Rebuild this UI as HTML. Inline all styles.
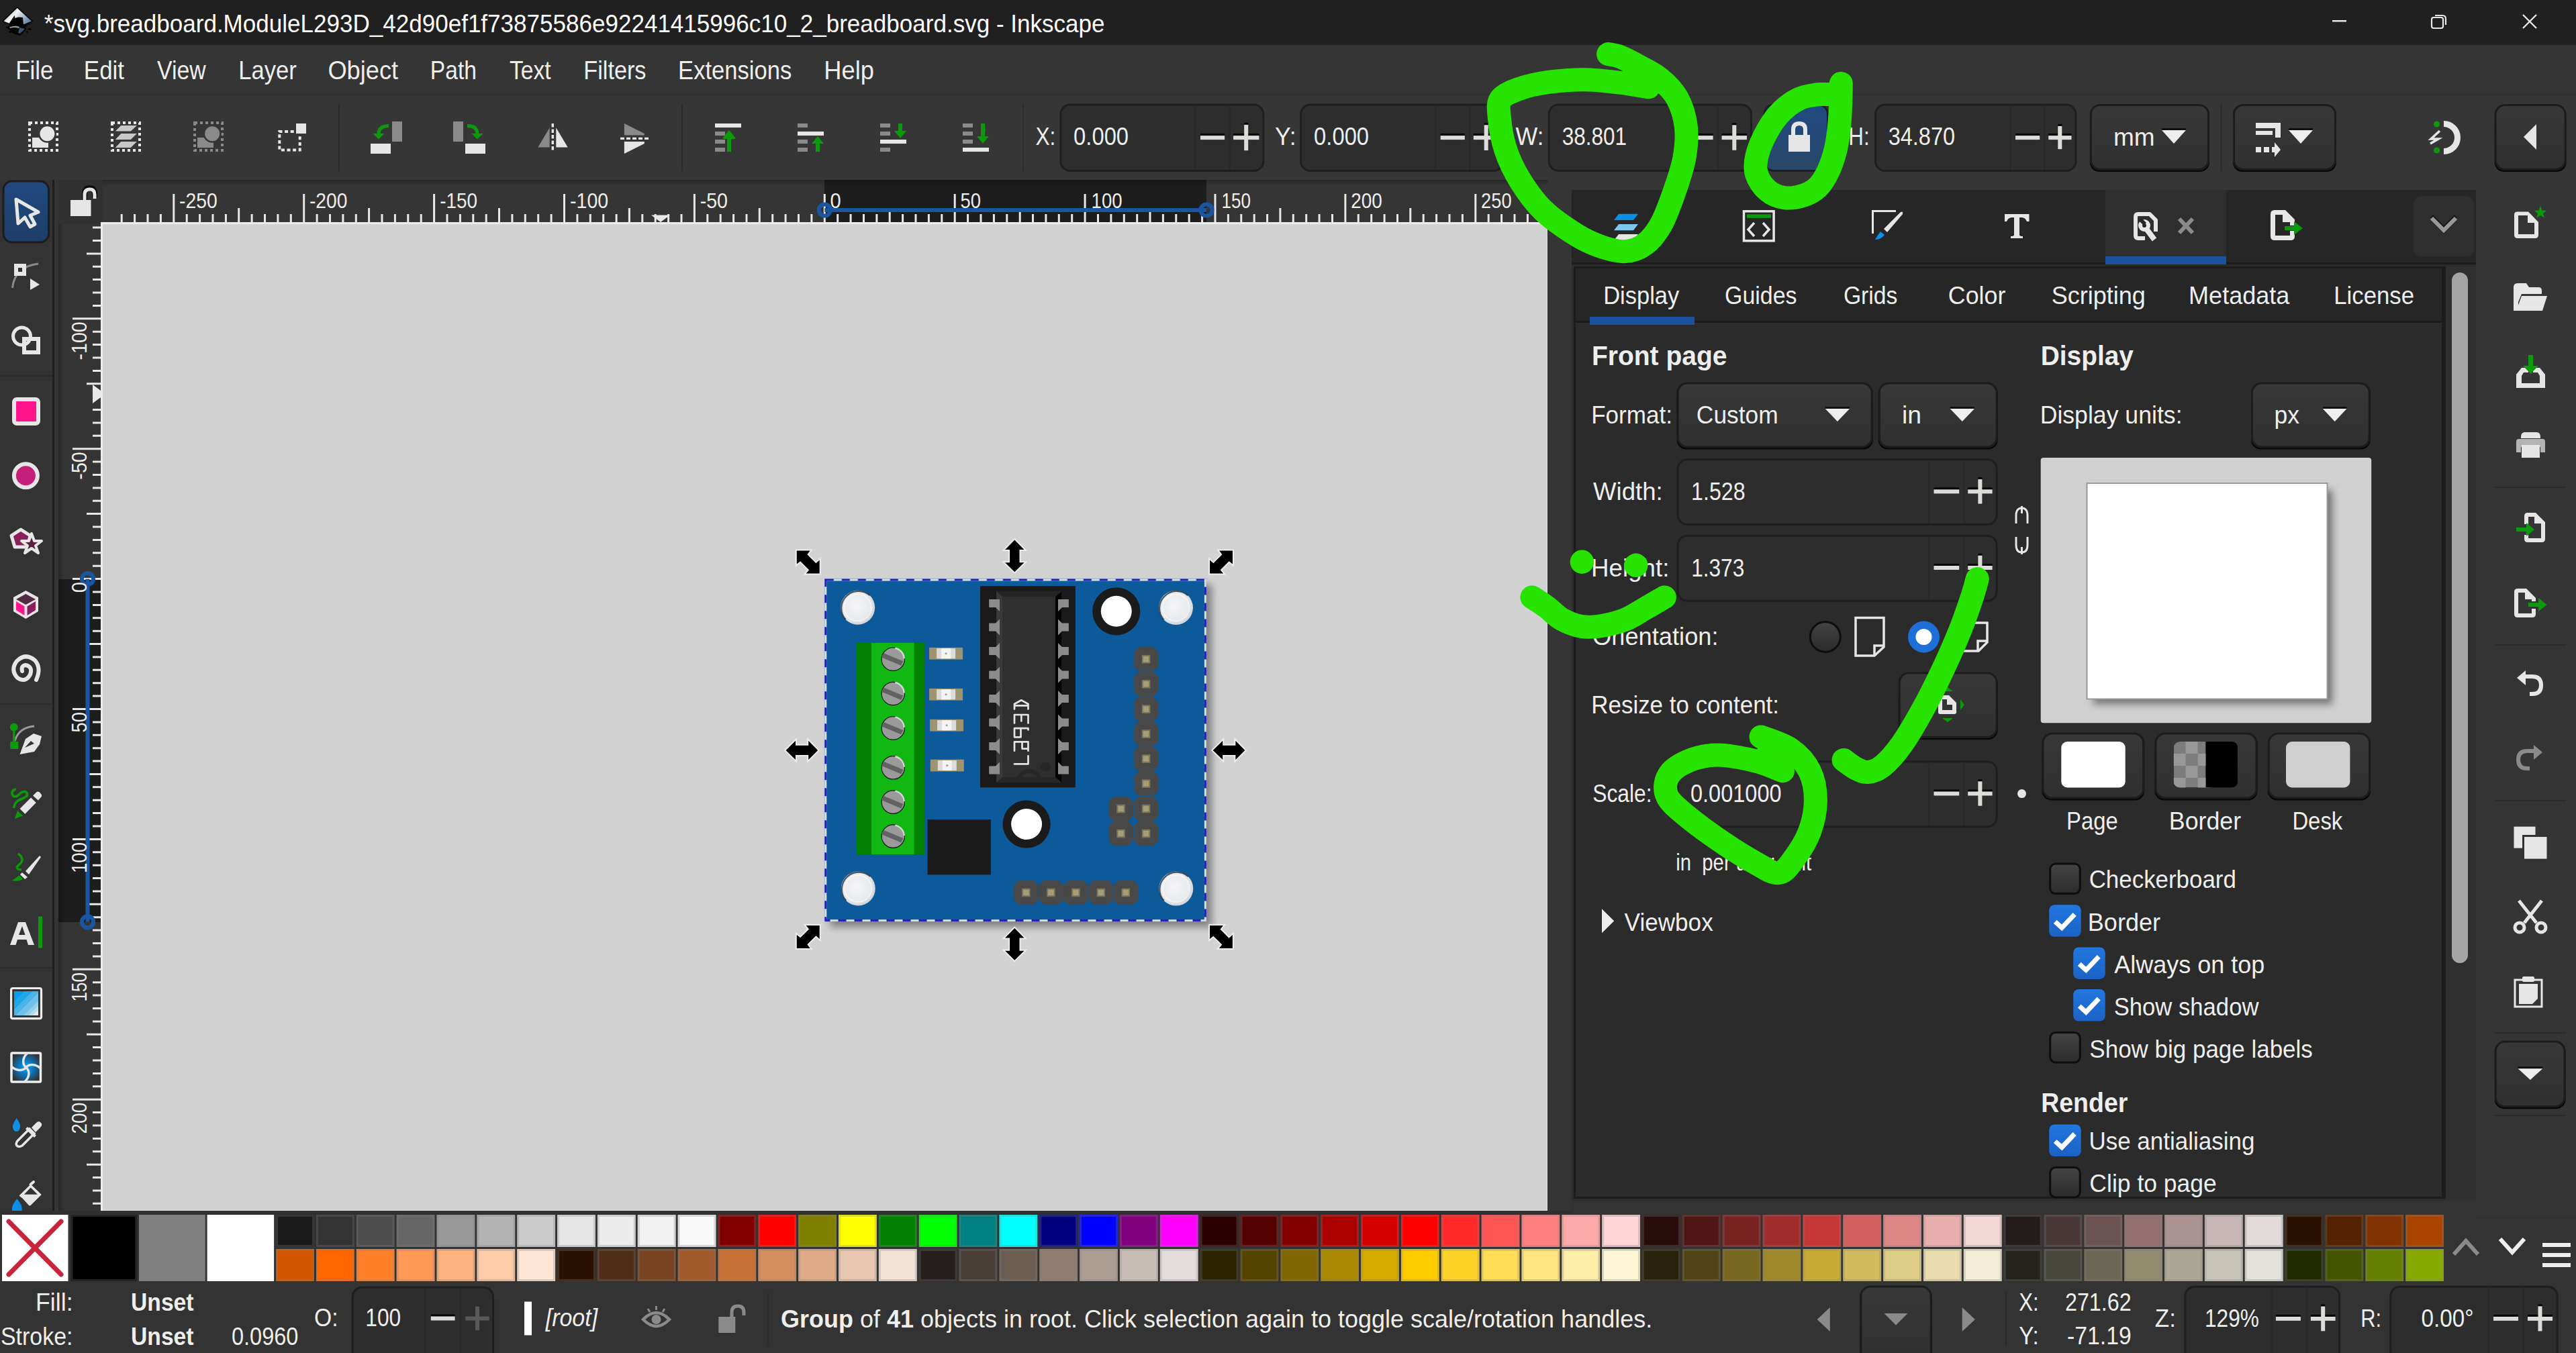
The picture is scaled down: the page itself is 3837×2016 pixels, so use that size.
<!DOCTYPE html><html><head><meta charset="utf-8"><style>html,body{margin:0;padding:0;background:#333;overflow:hidden;width:3837px;height:2016px}svg{position:absolute;left:0;top:0;display:block}text{font-family:"Liberation Sans",sans-serif;white-space:pre}</style></head><body><svg width="3837" height="2016" viewBox="0 0 3837 2016"><rect x="0" y="0" width="3837" height="2016" fill="#333333" />
<rect x="0" y="0" width="3837" height="67" fill="#202020" />
<rect x="0" y="67" width="3837" height="73" fill="#353535" />
<rect x="0" y="140" width="3837" height="2" fill="#303030" />
<rect x="0" y="142" width="3837" height="126" fill="#363636" />
<rect x="0" y="268" width="78" height="1542" fill="#333333" />
<rect x="78" y="268" width="3" height="1542" fill="#1f1f1f" />
<rect x="81" y="268" width="6" height="1542" fill="#353535" />
<rect x="87" y="268" width="66" height="66" fill="#313131" />
<rect x="153" y="268" width="2152" height="63" fill="#353535" />
<rect x="87" y="334" width="63" height="1470" fill="#353535" />
<rect x="153" y="334" width="2152" height="1470" fill="#d2d2d2" />
<rect x="150" y="331" width="2155" height="3" fill="#ececec" />
<rect x="150" y="331" width="3" height="1473" fill="#ececec" />
<rect x="2304" y="334" width="1" height="1470" fill="#e2e2e2" />
<rect x="153" y="1803" width="2152" height="1" fill="#e2e2e2" />
<rect x="2305" y="268" width="36" height="1542" fill="#353535" />
<rect x="2305" y="331" width="1" height="1473" fill="#2c2c2c" />
<rect x="2341" y="268" width="1347" height="15" fill="#353535" />
<rect x="0" y="1804" width="2341" height="6" fill="#303030" />
<rect x="2341" y="283" width="1347" height="1506" fill="#2c2c2c" />
<rect x="2341" y="283" width="1347" height="108" fill="#262626" />
<rect x="3136" y="283" width="180" height="108" fill="#2e2e2e" />
<rect x="3136" y="382" width="180" height="12" fill="#1a52a0" />
<rect x="2341" y="391" width="795" height="3" fill="#1c1c1c" />
<rect x="3316" y="391" width="372" height="3" fill="#1c1c1c" />
<rect x="2341" y="394" width="1347" height="3" fill="#2a2a2a" />
<rect x="2344" y="397" width="1299" height="1389" fill="#1c1c1c" />
<rect x="2347" y="400" width="1290" height="1383" fill="#2b2b2b" />
<rect x="2347" y="400" width="1290" height="78" fill="#262626" />
<rect x="2347" y="478" width="1290" height="3" fill="#1c1c1c" />
<rect x="2368" y="472" width="156" height="12" fill="#1a52a0" />
<rect x="3643" y="397" width="45" height="1392" fill="#2f2f2f" />
<rect x="3652" y="406" width="24" height="1029" rx="12" fill="#a5a5a5"/>
<rect x="3688" y="268" width="149" height="1542" fill="#353535" />
<rect x="0" y="1810" width="3837" height="206" fill="#333333" />
<rect x="411.10" y="1810" width="56.85" height="48" fill="#1a1a1a"/>
<rect x="412.60" y="1811.5" width="53.85" height="45" fill="none" stroke="rgba(128,128,128,0.28)" stroke-width="3"/>
<rect x="470.95" y="1810" width="56.85" height="48" fill="#333333"/>
<rect x="472.45" y="1811.5" width="53.85" height="45" fill="none" stroke="rgba(128,128,128,0.28)" stroke-width="3"/>
<rect x="530.80" y="1810" width="56.85" height="48" fill="#4d4d4d"/>
<rect x="532.30" y="1811.5" width="53.85" height="45" fill="none" stroke="rgba(128,128,128,0.28)" stroke-width="3"/>
<rect x="590.65" y="1810" width="56.85" height="48" fill="#666666"/>
<rect x="592.15" y="1811.5" width="53.85" height="45" fill="none" stroke="rgba(128,128,128,0.28)" stroke-width="3"/>
<rect x="650.50" y="1810" width="56.85" height="48" fill="#999999"/>
<rect x="652.00" y="1811.5" width="53.85" height="45" fill="none" stroke="rgba(128,128,128,0.28)" stroke-width="3"/>
<rect x="710.35" y="1810" width="56.85" height="48" fill="#b3b3b3"/>
<rect x="711.85" y="1811.5" width="53.85" height="45" fill="none" stroke="rgba(128,128,128,0.28)" stroke-width="3"/>
<rect x="770.20" y="1810" width="56.85" height="48" fill="#cccccc"/>
<rect x="771.70" y="1811.5" width="53.85" height="45" fill="none" stroke="rgba(128,128,128,0.28)" stroke-width="3"/>
<rect x="830.05" y="1810" width="56.85" height="48" fill="#e6e6e6"/>
<rect x="831.55" y="1811.5" width="53.85" height="45" fill="none" stroke="rgba(128,128,128,0.28)" stroke-width="3"/>
<rect x="889.90" y="1810" width="56.85" height="48" fill="#ececec"/>
<rect x="891.40" y="1811.5" width="53.85" height="45" fill="none" stroke="rgba(128,128,128,0.28)" stroke-width="3"/>
<rect x="949.75" y="1810" width="56.85" height="48" fill="#f2f2f2"/>
<rect x="951.25" y="1811.5" width="53.85" height="45" fill="none" stroke="rgba(128,128,128,0.28)" stroke-width="3"/>
<rect x="1009.60" y="1810" width="56.85" height="48" fill="#f9f9f9"/>
<rect x="1011.10" y="1811.5" width="53.85" height="45" fill="none" stroke="rgba(128,128,128,0.28)" stroke-width="3"/>
<rect x="1069.45" y="1810" width="56.85" height="48" fill="#800000"/>
<rect x="1070.95" y="1811.5" width="53.85" height="45" fill="none" stroke="rgba(128,128,128,0.28)" stroke-width="3"/>
<rect x="1129.30" y="1810" width="56.85" height="48" fill="#ff0000"/>
<rect x="1130.80" y="1811.5" width="53.85" height="45" fill="none" stroke="rgba(128,128,128,0.28)" stroke-width="3"/>
<rect x="1189.15" y="1810" width="56.85" height="48" fill="#808000"/>
<rect x="1190.65" y="1811.5" width="53.85" height="45" fill="none" stroke="rgba(128,128,128,0.28)" stroke-width="3"/>
<rect x="1249.00" y="1810" width="56.85" height="48" fill="#ffff00"/>
<rect x="1250.50" y="1811.5" width="53.85" height="45" fill="none" stroke="rgba(128,128,128,0.28)" stroke-width="3"/>
<rect x="1308.85" y="1810" width="56.85" height="48" fill="#008000"/>
<rect x="1310.35" y="1811.5" width="53.85" height="45" fill="none" stroke="rgba(128,128,128,0.28)" stroke-width="3"/>
<rect x="1368.70" y="1810" width="56.85" height="48" fill="#00ff00"/>
<rect x="1370.20" y="1811.5" width="53.85" height="45" fill="none" stroke="rgba(128,128,128,0.28)" stroke-width="3"/>
<rect x="1428.55" y="1810" width="56.85" height="48" fill="#008080"/>
<rect x="1430.05" y="1811.5" width="53.85" height="45" fill="none" stroke="rgba(128,128,128,0.28)" stroke-width="3"/>
<rect x="1488.40" y="1810" width="56.85" height="48" fill="#00ffff"/>
<rect x="1489.90" y="1811.5" width="53.85" height="45" fill="none" stroke="rgba(128,128,128,0.28)" stroke-width="3"/>
<rect x="1548.25" y="1810" width="56.85" height="48" fill="#000080"/>
<rect x="1549.75" y="1811.5" width="53.85" height="45" fill="none" stroke="rgba(128,128,128,0.28)" stroke-width="3"/>
<rect x="1608.10" y="1810" width="56.85" height="48" fill="#0000ff"/>
<rect x="1609.60" y="1811.5" width="53.85" height="45" fill="none" stroke="rgba(128,128,128,0.28)" stroke-width="3"/>
<rect x="1667.95" y="1810" width="56.85" height="48" fill="#800080"/>
<rect x="1669.45" y="1811.5" width="53.85" height="45" fill="none" stroke="rgba(128,128,128,0.28)" stroke-width="3"/>
<rect x="1727.80" y="1810" width="56.85" height="48" fill="#ff00ff"/>
<rect x="1729.30" y="1811.5" width="53.85" height="45" fill="none" stroke="rgba(128,128,128,0.28)" stroke-width="3"/>
<rect x="1787.65" y="1810" width="56.85" height="48" fill="#2b0000"/>
<rect x="1789.15" y="1811.5" width="53.85" height="45" fill="none" stroke="rgba(128,128,128,0.28)" stroke-width="3"/>
<rect x="1847.50" y="1810" width="56.85" height="48" fill="#550000"/>
<rect x="1849.00" y="1811.5" width="53.85" height="45" fill="none" stroke="rgba(128,128,128,0.28)" stroke-width="3"/>
<rect x="1907.35" y="1810" width="56.85" height="48" fill="#800000"/>
<rect x="1908.85" y="1811.5" width="53.85" height="45" fill="none" stroke="rgba(128,128,128,0.28)" stroke-width="3"/>
<rect x="1967.20" y="1810" width="56.85" height="48" fill="#aa0000"/>
<rect x="1968.70" y="1811.5" width="53.85" height="45" fill="none" stroke="rgba(128,128,128,0.28)" stroke-width="3"/>
<rect x="2027.05" y="1810" width="56.85" height="48" fill="#d40000"/>
<rect x="2028.55" y="1811.5" width="53.85" height="45" fill="none" stroke="rgba(128,128,128,0.28)" stroke-width="3"/>
<rect x="2086.90" y="1810" width="56.85" height="48" fill="#ff0000"/>
<rect x="2088.40" y="1811.5" width="53.85" height="45" fill="none" stroke="rgba(128,128,128,0.28)" stroke-width="3"/>
<rect x="2146.75" y="1810" width="56.85" height="48" fill="#ff2a2a"/>
<rect x="2148.25" y="1811.5" width="53.85" height="45" fill="none" stroke="rgba(128,128,128,0.28)" stroke-width="3"/>
<rect x="2206.60" y="1810" width="56.85" height="48" fill="#ff5555"/>
<rect x="2208.10" y="1811.5" width="53.85" height="45" fill="none" stroke="rgba(128,128,128,0.28)" stroke-width="3"/>
<rect x="2266.45" y="1810" width="56.85" height="48" fill="#ff8080"/>
<rect x="2267.95" y="1811.5" width="53.85" height="45" fill="none" stroke="rgba(128,128,128,0.28)" stroke-width="3"/>
<rect x="2326.30" y="1810" width="56.85" height="48" fill="#ffaaaa"/>
<rect x="2327.80" y="1811.5" width="53.85" height="45" fill="none" stroke="rgba(128,128,128,0.28)" stroke-width="3"/>
<rect x="2386.15" y="1810" width="56.85" height="48" fill="#ffd5d5"/>
<rect x="2387.65" y="1811.5" width="53.85" height="45" fill="none" stroke="rgba(128,128,128,0.28)" stroke-width="3"/>
<rect x="2446.00" y="1810" width="56.85" height="48" fill="#280b0b"/>
<rect x="2447.50" y="1811.5" width="53.85" height="45" fill="none" stroke="rgba(128,128,128,0.28)" stroke-width="3"/>
<rect x="2505.85" y="1810" width="56.85" height="48" fill="#501616"/>
<rect x="2507.35" y="1811.5" width="53.85" height="45" fill="none" stroke="rgba(128,128,128,0.28)" stroke-width="3"/>
<rect x="2565.70" y="1810" width="56.85" height="48" fill="#782121"/>
<rect x="2567.20" y="1811.5" width="53.85" height="45" fill="none" stroke="rgba(128,128,128,0.28)" stroke-width="3"/>
<rect x="2625.55" y="1810" width="56.85" height="48" fill="#a02c2c"/>
<rect x="2627.05" y="1811.5" width="53.85" height="45" fill="none" stroke="rgba(128,128,128,0.28)" stroke-width="3"/>
<rect x="2685.40" y="1810" width="56.85" height="48" fill="#c83737"/>
<rect x="2686.90" y="1811.5" width="53.85" height="45" fill="none" stroke="rgba(128,128,128,0.28)" stroke-width="3"/>
<rect x="2745.25" y="1810" width="56.85" height="48" fill="#d35f5f"/>
<rect x="2746.75" y="1811.5" width="53.85" height="45" fill="none" stroke="rgba(128,128,128,0.28)" stroke-width="3"/>
<rect x="2805.10" y="1810" width="56.85" height="48" fill="#de8787"/>
<rect x="2806.60" y="1811.5" width="53.85" height="45" fill="none" stroke="rgba(128,128,128,0.28)" stroke-width="3"/>
<rect x="2864.95" y="1810" width="56.85" height="48" fill="#e9afaf"/>
<rect x="2866.45" y="1811.5" width="53.85" height="45" fill="none" stroke="rgba(128,128,128,0.28)" stroke-width="3"/>
<rect x="2924.80" y="1810" width="56.85" height="48" fill="#f4d7d7"/>
<rect x="2926.30" y="1811.5" width="53.85" height="45" fill="none" stroke="rgba(128,128,128,0.28)" stroke-width="3"/>
<rect x="2984.65" y="1810" width="56.85" height="48" fill="#241c1c"/>
<rect x="2986.15" y="1811.5" width="53.85" height="45" fill="none" stroke="rgba(128,128,128,0.28)" stroke-width="3"/>
<rect x="3044.50" y="1810" width="56.85" height="48" fill="#483737"/>
<rect x="3046.00" y="1811.5" width="53.85" height="45" fill="none" stroke="rgba(128,128,128,0.28)" stroke-width="3"/>
<rect x="3104.35" y="1810" width="56.85" height="48" fill="#6c5353"/>
<rect x="3105.85" y="1811.5" width="53.85" height="45" fill="none" stroke="rgba(128,128,128,0.28)" stroke-width="3"/>
<rect x="3164.20" y="1810" width="56.85" height="48" fill="#916f6f"/>
<rect x="3165.70" y="1811.5" width="53.85" height="45" fill="none" stroke="rgba(128,128,128,0.28)" stroke-width="3"/>
<rect x="3224.05" y="1810" width="56.85" height="48" fill="#ac9393"/>
<rect x="3225.55" y="1811.5" width="53.85" height="45" fill="none" stroke="rgba(128,128,128,0.28)" stroke-width="3"/>
<rect x="3283.90" y="1810" width="56.85" height="48" fill="#c8b7b7"/>
<rect x="3285.40" y="1811.5" width="53.85" height="45" fill="none" stroke="rgba(128,128,128,0.28)" stroke-width="3"/>
<rect x="3343.75" y="1810" width="56.85" height="48" fill="#e3dbdb"/>
<rect x="3345.25" y="1811.5" width="53.85" height="45" fill="none" stroke="rgba(128,128,128,0.28)" stroke-width="3"/>
<rect x="3403.60" y="1810" width="56.85" height="48" fill="#2b1100"/>
<rect x="3405.10" y="1811.5" width="53.85" height="45" fill="none" stroke="rgba(128,128,128,0.28)" stroke-width="3"/>
<rect x="3463.45" y="1810" width="56.85" height="48" fill="#552200"/>
<rect x="3464.95" y="1811.5" width="53.85" height="45" fill="none" stroke="rgba(128,128,128,0.28)" stroke-width="3"/>
<rect x="3523.30" y="1810" width="56.85" height="48" fill="#803300"/>
<rect x="3524.80" y="1811.5" width="53.85" height="45" fill="none" stroke="rgba(128,128,128,0.28)" stroke-width="3"/>
<rect x="3583.15" y="1810" width="56.85" height="48" fill="#aa4400"/>
<rect x="3584.65" y="1811.5" width="53.85" height="45" fill="none" stroke="rgba(128,128,128,0.28)" stroke-width="3"/>
<rect x="411.10" y="1861" width="56.85" height="48" fill="#d45500"/>
<rect x="412.60" y="1862.5" width="53.85" height="45" fill="none" stroke="rgba(128,128,128,0.28)" stroke-width="3"/>
<rect x="470.95" y="1861" width="56.85" height="48" fill="#ff6600"/>
<rect x="472.45" y="1862.5" width="53.85" height="45" fill="none" stroke="rgba(128,128,128,0.28)" stroke-width="3"/>
<rect x="530.80" y="1861" width="56.85" height="48" fill="#ff7f2a"/>
<rect x="532.30" y="1862.5" width="53.85" height="45" fill="none" stroke="rgba(128,128,128,0.28)" stroke-width="3"/>
<rect x="590.65" y="1861" width="56.85" height="48" fill="#ff9955"/>
<rect x="592.15" y="1862.5" width="53.85" height="45" fill="none" stroke="rgba(128,128,128,0.28)" stroke-width="3"/>
<rect x="650.50" y="1861" width="56.85" height="48" fill="#ffb380"/>
<rect x="652.00" y="1862.5" width="53.85" height="45" fill="none" stroke="rgba(128,128,128,0.28)" stroke-width="3"/>
<rect x="710.35" y="1861" width="56.85" height="48" fill="#ffccaa"/>
<rect x="711.85" y="1862.5" width="53.85" height="45" fill="none" stroke="rgba(128,128,128,0.28)" stroke-width="3"/>
<rect x="770.20" y="1861" width="56.85" height="48" fill="#ffe6d5"/>
<rect x="771.70" y="1862.5" width="53.85" height="45" fill="none" stroke="rgba(128,128,128,0.28)" stroke-width="3"/>
<rect x="830.05" y="1861" width="56.85" height="48" fill="#2b1100"/>
<rect x="831.55" y="1862.5" width="53.85" height="45" fill="none" stroke="rgba(128,128,128,0.28)" stroke-width="3"/>
<rect x="889.90" y="1861" width="56.85" height="48" fill="#502d16"/>
<rect x="891.40" y="1862.5" width="53.85" height="45" fill="none" stroke="rgba(128,128,128,0.28)" stroke-width="3"/>
<rect x="949.75" y="1861" width="56.85" height="48" fill="#784421"/>
<rect x="951.25" y="1862.5" width="53.85" height="45" fill="none" stroke="rgba(128,128,128,0.28)" stroke-width="3"/>
<rect x="1009.60" y="1861" width="56.85" height="48" fill="#a05a2c"/>
<rect x="1011.10" y="1862.5" width="53.85" height="45" fill="none" stroke="rgba(128,128,128,0.28)" stroke-width="3"/>
<rect x="1069.45" y="1861" width="56.85" height="48" fill="#c87137"/>
<rect x="1070.95" y="1862.5" width="53.85" height="45" fill="none" stroke="rgba(128,128,128,0.28)" stroke-width="3"/>
<rect x="1129.30" y="1861" width="56.85" height="48" fill="#d38d5f"/>
<rect x="1130.80" y="1862.5" width="53.85" height="45" fill="none" stroke="rgba(128,128,128,0.28)" stroke-width="3"/>
<rect x="1189.15" y="1861" width="56.85" height="48" fill="#deaa87"/>
<rect x="1190.65" y="1862.5" width="53.85" height="45" fill="none" stroke="rgba(128,128,128,0.28)" stroke-width="3"/>
<rect x="1249.00" y="1861" width="56.85" height="48" fill="#e9c6af"/>
<rect x="1250.50" y="1862.5" width="53.85" height="45" fill="none" stroke="rgba(128,128,128,0.28)" stroke-width="3"/>
<rect x="1308.85" y="1861" width="56.85" height="48" fill="#f4e3d7"/>
<rect x="1310.35" y="1862.5" width="53.85" height="45" fill="none" stroke="rgba(128,128,128,0.28)" stroke-width="3"/>
<rect x="1368.70" y="1861" width="56.85" height="48" fill="#241f1c"/>
<rect x="1370.20" y="1862.5" width="53.85" height="45" fill="none" stroke="rgba(128,128,128,0.28)" stroke-width="3"/>
<rect x="1428.55" y="1861" width="56.85" height="48" fill="#483e37"/>
<rect x="1430.05" y="1862.5" width="53.85" height="45" fill="none" stroke="rgba(128,128,128,0.28)" stroke-width="3"/>
<rect x="1488.40" y="1861" width="56.85" height="48" fill="#6c5d53"/>
<rect x="1489.90" y="1862.5" width="53.85" height="45" fill="none" stroke="rgba(128,128,128,0.28)" stroke-width="3"/>
<rect x="1548.25" y="1861" width="56.85" height="48" fill="#917c6f"/>
<rect x="1549.75" y="1862.5" width="53.85" height="45" fill="none" stroke="rgba(128,128,128,0.28)" stroke-width="3"/>
<rect x="1608.10" y="1861" width="56.85" height="48" fill="#ac9d93"/>
<rect x="1609.60" y="1862.5" width="53.85" height="45" fill="none" stroke="rgba(128,128,128,0.28)" stroke-width="3"/>
<rect x="1667.95" y="1861" width="56.85" height="48" fill="#c8beb7"/>
<rect x="1669.45" y="1862.5" width="53.85" height="45" fill="none" stroke="rgba(128,128,128,0.28)" stroke-width="3"/>
<rect x="1727.80" y="1861" width="56.85" height="48" fill="#e3dedb"/>
<rect x="1729.30" y="1862.5" width="53.85" height="45" fill="none" stroke="rgba(128,128,128,0.28)" stroke-width="3"/>
<rect x="1787.65" y="1861" width="56.85" height="48" fill="#2b2200"/>
<rect x="1789.15" y="1862.5" width="53.85" height="45" fill="none" stroke="rgba(128,128,128,0.28)" stroke-width="3"/>
<rect x="1847.50" y="1861" width="56.85" height="48" fill="#554400"/>
<rect x="1849.00" y="1862.5" width="53.85" height="45" fill="none" stroke="rgba(128,128,128,0.28)" stroke-width="3"/>
<rect x="1907.35" y="1861" width="56.85" height="48" fill="#806600"/>
<rect x="1908.85" y="1862.5" width="53.85" height="45" fill="none" stroke="rgba(128,128,128,0.28)" stroke-width="3"/>
<rect x="1967.20" y="1861" width="56.85" height="48" fill="#aa8800"/>
<rect x="1968.70" y="1862.5" width="53.85" height="45" fill="none" stroke="rgba(128,128,128,0.28)" stroke-width="3"/>
<rect x="2027.05" y="1861" width="56.85" height="48" fill="#d4aa00"/>
<rect x="2028.55" y="1862.5" width="53.85" height="45" fill="none" stroke="rgba(128,128,128,0.28)" stroke-width="3"/>
<rect x="2086.90" y="1861" width="56.85" height="48" fill="#ffcc00"/>
<rect x="2088.40" y="1862.5" width="53.85" height="45" fill="none" stroke="rgba(128,128,128,0.28)" stroke-width="3"/>
<rect x="2146.75" y="1861" width="56.85" height="48" fill="#ffd42a"/>
<rect x="2148.25" y="1862.5" width="53.85" height="45" fill="none" stroke="rgba(128,128,128,0.28)" stroke-width="3"/>
<rect x="2206.60" y="1861" width="56.85" height="48" fill="#ffdd55"/>
<rect x="2208.10" y="1862.5" width="53.85" height="45" fill="none" stroke="rgba(128,128,128,0.28)" stroke-width="3"/>
<rect x="2266.45" y="1861" width="56.85" height="48" fill="#ffe680"/>
<rect x="2267.95" y="1862.5" width="53.85" height="45" fill="none" stroke="rgba(128,128,128,0.28)" stroke-width="3"/>
<rect x="2326.30" y="1861" width="56.85" height="48" fill="#ffeeaa"/>
<rect x="2327.80" y="1862.5" width="53.85" height="45" fill="none" stroke="rgba(128,128,128,0.28)" stroke-width="3"/>
<rect x="2386.15" y="1861" width="56.85" height="48" fill="#fff6d5"/>
<rect x="2387.65" y="1862.5" width="53.85" height="45" fill="none" stroke="rgba(128,128,128,0.28)" stroke-width="3"/>
<rect x="2446.00" y="1861" width="56.85" height="48" fill="#28220b"/>
<rect x="2447.50" y="1862.5" width="53.85" height="45" fill="none" stroke="rgba(128,128,128,0.28)" stroke-width="3"/>
<rect x="2505.85" y="1861" width="56.85" height="48" fill="#504416"/>
<rect x="2507.35" y="1862.5" width="53.85" height="45" fill="none" stroke="rgba(128,128,128,0.28)" stroke-width="3"/>
<rect x="2565.70" y="1861" width="56.85" height="48" fill="#786721"/>
<rect x="2567.20" y="1862.5" width="53.85" height="45" fill="none" stroke="rgba(128,128,128,0.28)" stroke-width="3"/>
<rect x="2625.55" y="1861" width="56.85" height="48" fill="#a0892c"/>
<rect x="2627.05" y="1862.5" width="53.85" height="45" fill="none" stroke="rgba(128,128,128,0.28)" stroke-width="3"/>
<rect x="2685.40" y="1861" width="56.85" height="48" fill="#c8ab37"/>
<rect x="2686.90" y="1862.5" width="53.85" height="45" fill="none" stroke="rgba(128,128,128,0.28)" stroke-width="3"/>
<rect x="2745.25" y="1861" width="56.85" height="48" fill="#d3bc5f"/>
<rect x="2746.75" y="1862.5" width="53.85" height="45" fill="none" stroke="rgba(128,128,128,0.28)" stroke-width="3"/>
<rect x="2805.10" y="1861" width="56.85" height="48" fill="#decd87"/>
<rect x="2806.60" y="1862.5" width="53.85" height="45" fill="none" stroke="rgba(128,128,128,0.28)" stroke-width="3"/>
<rect x="2864.95" y="1861" width="56.85" height="48" fill="#e9ddaf"/>
<rect x="2866.45" y="1862.5" width="53.85" height="45" fill="none" stroke="rgba(128,128,128,0.28)" stroke-width="3"/>
<rect x="2924.80" y="1861" width="56.85" height="48" fill="#f4eed7"/>
<rect x="2926.30" y="1862.5" width="53.85" height="45" fill="none" stroke="rgba(128,128,128,0.28)" stroke-width="3"/>
<rect x="2984.65" y="1861" width="56.85" height="48" fill="#24241c"/>
<rect x="2986.15" y="1862.5" width="53.85" height="45" fill="none" stroke="rgba(128,128,128,0.28)" stroke-width="3"/>
<rect x="3044.50" y="1861" width="56.85" height="48" fill="#48473e"/>
<rect x="3046.00" y="1862.5" width="53.85" height="45" fill="none" stroke="rgba(128,128,128,0.28)" stroke-width="3"/>
<rect x="3104.35" y="1861" width="56.85" height="48" fill="#6c6753"/>
<rect x="3105.85" y="1862.5" width="53.85" height="45" fill="none" stroke="rgba(128,128,128,0.28)" stroke-width="3"/>
<rect x="3164.20" y="1861" width="56.85" height="48" fill="#918a6f"/>
<rect x="3165.70" y="1862.5" width="53.85" height="45" fill="none" stroke="rgba(128,128,128,0.28)" stroke-width="3"/>
<rect x="3224.05" y="1861" width="56.85" height="48" fill="#aca793"/>
<rect x="3225.55" y="1862.5" width="53.85" height="45" fill="none" stroke="rgba(128,128,128,0.28)" stroke-width="3"/>
<rect x="3283.90" y="1861" width="56.85" height="48" fill="#c8c4b7"/>
<rect x="3285.40" y="1862.5" width="53.85" height="45" fill="none" stroke="rgba(128,128,128,0.28)" stroke-width="3"/>
<rect x="3343.75" y="1861" width="56.85" height="48" fill="#e3e2db"/>
<rect x="3345.25" y="1862.5" width="53.85" height="45" fill="none" stroke="rgba(128,128,128,0.28)" stroke-width="3"/>
<rect x="3403.60" y="1861" width="56.85" height="48" fill="#222b00"/>
<rect x="3405.10" y="1862.5" width="53.85" height="45" fill="none" stroke="rgba(128,128,128,0.28)" stroke-width="3"/>
<rect x="3463.45" y="1861" width="56.85" height="48" fill="#445500"/>
<rect x="3464.95" y="1862.5" width="53.85" height="45" fill="none" stroke="rgba(128,128,128,0.28)" stroke-width="3"/>
<rect x="3523.30" y="1861" width="56.85" height="48" fill="#668000"/>
<rect x="3524.80" y="1862.5" width="53.85" height="45" fill="none" stroke="rgba(128,128,128,0.28)" stroke-width="3"/>
<rect x="3583.15" y="1861" width="56.85" height="48" fill="#88aa00"/>
<rect x="3584.65" y="1862.5" width="53.85" height="45" fill="none" stroke="rgba(128,128,128,0.28)" stroke-width="3"/>
<rect x="3" y="1810" width="98.5" height="99" fill="#ffffff"/>
<path d="M13 1820 L91 1899 M91 1820 L13 1899" stroke="#c8243c" stroke-width="7" stroke-linecap="round"/>
<rect x="105.50" y="1810" width="98.70" height="99" fill="#000000"/>
<rect x="107.00" y="1811.5" width="95.70" height="96" fill="none" stroke="rgba(128,128,128,0.28)" stroke-width="3"/>
<rect x="207.00" y="1810" width="98.60" height="99" fill="#808080"/>
<rect x="208.50" y="1811.5" width="95.60" height="96" fill="none" stroke="rgba(128,128,128,0.28)" stroke-width="3"/>
<rect x="308.6" y="1810" width="99.5" height="99" fill="#ffffff"/>
<path d="M3655 1869 L3673 1849 L3691 1869" fill="none" stroke="#8a8a8a" stroke-width="6"/>
<path d="M3724 1846 L3742 1866 L3760 1846" fill="none" stroke="#eeeeec" stroke-width="6"/>
<rect x="3787" y="1852" width="42" height="6" fill="#eeeeec" />
<rect x="3787" y="1867" width="42" height="6" fill="#eeeeec" />
<rect x="3787" y="1882" width="42" height="6" fill="#eeeeec" />
<rect x="1228" y="268" width="569" height="63" fill="#1d1d1d" />
<rect x="87" y="863" width="63" height="511" fill="#1d1d1d" />
<defs><linearGradient id="vrsh" x1="0" y1="0" x2="1" y2="0"><stop offset="0" stop-color="#000" stop-opacity="0.25"/><stop offset="1" stop-color="#000" stop-opacity="0"/></linearGradient><linearGradient id="hrsh" x1="0" y1="0" x2="0" y2="1"><stop offset="0" stop-color="#000" stop-opacity="0.25"/><stop offset="1" stop-color="#000" stop-opacity="0"/></linearGradient></defs>
<rect x="87" y="334" width="10" height="1470" fill="url(#vrsh)"/>
<rect x="153" y="268" width="2152" height="9" fill="url(#hrsh)"/>
<path d="M181.2 319V331 M200.6 319V331 M220.0 319V331 M239.4 319V331 M258.8 289V331 M278.2 319V331 M297.6 319V331 M317.0 319V331 M336.4 319V331 M355.7 310V331 M375.1 319V331 M394.5 319V331 M413.9 319V331 M433.3 319V331 M452.7 289V331 M472.1 319V331 M491.5 319V331 M510.9 319V331 M530.3 319V331 M549.6 310V331 M569.0 319V331 M588.4 319V331 M607.8 319V331 M627.2 319V331 M646.6 289V331 M666.0 319V331 M685.4 319V331 M704.8 319V331 M724.2 319V331 M743.5 310V331 M762.9 319V331 M782.3 319V331 M801.7 319V331 M821.1 319V331 M840.5 289V331 M859.9 319V331 M879.3 319V331 M898.7 319V331 M918.1 319V331 M937.4 310V331 M956.8 319V331 M976.2 319V331 M995.6 319V331 M1015.0 319V331 M1034.4 289V331 M1053.8 319V331 M1073.2 319V331 M1092.6 319V331 M1112.0 319V331 M1131.3 310V331 M1150.7 319V331 M1170.1 319V331 M1189.5 319V331 M1208.9 319V331 M1228.3 289V331 M1247.7 319V331 M1267.1 319V331 M1286.5 319V331 M1305.9 319V331 M1325.2 310V331 M1344.6 319V331 M1364.0 319V331 M1383.4 319V331 M1402.8 319V331 M1422.2 289V331 M1441.6 319V331 M1461.0 319V331 M1480.4 319V331 M1499.8 319V331 M1519.2 310V331 M1538.5 319V331 M1557.9 319V331 M1577.3 319V331 M1596.7 319V331 M1616.1 289V331 M1635.5 319V331 M1654.9 319V331 M1674.3 319V331 M1693.7 319V331 M1713.0 310V331 M1732.4 319V331 M1751.8 319V331 M1771.2 319V331 M1790.6 319V331 M1810.0 289V331 M1829.4 319V331 M1848.8 319V331 M1868.2 319V331 M1887.6 319V331 M1906.9 310V331 M1926.3 319V331 M1945.7 319V331 M1965.1 319V331 M1984.5 319V331 M2003.9 289V331 M2023.3 319V331 M2042.7 319V331 M2062.1 319V331 M2081.5 319V331 M2100.8 310V331 M2120.2 319V331 M2139.6 319V331 M2159.0 319V331 M2178.4 319V331 M2197.8 289V331 M2217.2 319V331 M2236.6 319V331 M2256.0 319V331 M2275.4 319V331 M2294.8 310V331" stroke="#e8e8e8" stroke-width="3"/>
<path d="M138 339.1H150 M138 358.5H150 M129 377.9H150 M138 397.2H150 M138 416.6H150 M138 436.0H150 M138 455.4H150 M108 474.8H150 M138 494.2H150 M138 513.6H150 M138 533.0H150 M138 552.4H150 M129 571.8H150 M138 591.1H150 M138 610.5H150 M138 629.9H150 M138 649.3H150 M108 668.7H150 M138 688.1H150 M138 707.5H150 M138 726.9H150 M138 746.3H150 M129 765.6H150 M138 785.0H150 M138 804.4H150 M138 823.8H150 M138 843.2H150 M108 862.6H150 M138 882.0H150 M138 901.4H150 M138 920.8H150 M138 940.2H150 M129 959.6H150 M138 978.9H150 M138 998.3H150 M138 1017.7H150 M138 1037.1H150 M108 1056.5H150 M138 1075.9H150 M138 1095.3H150 M138 1114.7H150 M138 1134.1H150 M129 1153.5H150 M138 1172.8H150 M138 1192.2H150 M138 1211.6H150 M138 1231.0H150 M108 1250.4H150 M138 1269.8H150 M138 1289.2H150 M138 1308.6H150 M138 1328.0H150 M129 1347.3H150 M138 1366.7H150 M138 1386.1H150 M138 1405.5H150 M138 1424.9H150 M108 1444.3H150 M138 1463.7H150 M138 1483.1H150 M138 1502.5H150 M138 1521.9H150 M129 1541.2H150 M138 1560.6H150 M138 1580.0H150 M138 1599.4H150 M138 1618.8H150 M108 1638.2H150 M138 1657.6H150 M138 1677.0H150 M138 1696.4H150 M138 1715.8H150 M129 1735.2H150 M138 1754.5H150 M138 1773.9H150 M138 1793.3H150" stroke="#e8e8e8" stroke-width="3"/>
<rect x="1228.3" y="310" width="568.7" height="6" fill="#1a56a0"/>
<rect x="127.5" y="862.6" width="6" height="511.1" fill="#1a56a0"/>
<circle cx="1228.3" cy="313.0" r="8.6" fill="none" stroke="#1a56a0" stroke-width="6"/>
<circle cx="1797.0" cy="313.0" r="8.6" fill="none" stroke="#1a56a0" stroke-width="6"/>
<circle cx="130.5" cy="862.6" r="8.6" fill="none" stroke="#1a56a0" stroke-width="6"/>
<circle cx="130.5" cy="1373.7" r="8.6" fill="none" stroke="#1a56a0" stroke-width="6"/>
<path d="M970 320.5 L998 320.5 L984 331 Z" fill="#e8e8e8"/>
<path d="M138 573 L150 582 L150 592 L138 601 Z" fill="#e8e8e8"/>
<defs><linearGradient id="btng" x1="0" y1="0" x2="0" y2="1"><stop offset="0" stop-color="#383838"/><stop offset="1" stop-color="#303030"/></linearGradient></defs>
<defs><linearGradient id="logog" x1="0" y1="0" x2="1" y2="0.6"><stop offset="0" stop-color="#8a8a8a"/><stop offset="0.45" stop-color="#f4f4f4"/><stop offset="1" stop-color="#6a84aa"/></linearGradient></defs>
<path d="M25.6 9.5 L49.5 31.8 L38 40 L39 44 L30 53.5 L22 51 L18 49 L14 44 L8.5 41 L15 38 L3 31.4 Z" fill="#050505"/>
<path d="M25.6 12 L47 31.6 L36 36 L30 37.5 L18 36.5 L5.5 31.4 Z" fill="url(#logog)"/>
<path d="M13 36 L21.5 23 L22.5 27 L27.5 25.5 L34 26 L35 37.5 L27 38 Z" fill="#000"/>
<path d="M14 40.5 Q22 37.5 29 40 L28 42 Q21 40 15 42 Z" fill="#9a9a9a"/>
<path d="M29 41 L37 43 L30 50 L27 49 Z" fill="#3a5070"/>
<circle cx="15.2" cy="47.4" r="1.5" fill="#000"/><circle cx="40.5" cy="47.5" r="1.3" fill="#000"/><ellipse cx="44" cy="43.5" rx="2.6" ry="1.6" fill="#000"/>
<rect x="3474" y="30" width="21" height="2.5" fill="#e8e8e8"/>
<rect x="3622" y="26" width="17" height="16" rx="3" fill="none" stroke="#e8e8e8" stroke-width="2.2"/>
<path d="M3627 23 H3638 Q3643 23 3643 28 V37" fill="none" stroke="#e8e8e8" stroke-width="2.2"/>
<path d="M3758 22 L3778 42 M3778 22 L3758 42" stroke="#e8e8e8" stroke-width="2.4"/>
<rect x="44.0" y="183.0" width="41.0" height="41.0" fill="none" stroke="#e6e6e6" stroke-width="4" stroke-dasharray="4 4"/>
<rect x="48" y="205" width="24" height="15" fill="#e6e6e6"/><circle cx="70.4" cy="199.2" r="12.3" fill="#e6e6e6" stroke="#363636" stroke-width="2.6"/>
<rect x="167.0" y="183.0" width="41.0" height="41.0" fill="none" stroke="#e6e6e6" stroke-width="4" stroke-dasharray="4 4"/>
<path d="M171.8 195.6 H194.8 L203.9 187.1 H180.3Z M171.8 207.9 H194.8 L203.9 199 H180.3Z M171.8 219.9 H194.8 L203.9 211 H180.3Z" fill="#c8c8c8"/>
<rect x="290.0" y="183.0" width="41.0" height="41.0" fill="none" stroke="#8a8a8a" stroke-width="4" stroke-dasharray="4 4"/>
<rect x="294" y="205" width="24" height="15" fill="#8a8a8a"/><circle cx="316.2" cy="199.2" r="12.3" fill="#8a8a8a" stroke="#363636" stroke-width="2.6"/>
<path d="M446.7 203.3 V223.5 H416.3 V195.9 H439" fill="none" stroke="#e6e6e6" stroke-width="4" stroke-dasharray="5 3.6"/>
<rect x="441" y="184" width="15" height="15" fill="#e6e6e6"/>
<rect x="504" y="155" width="2" height="100" fill="#2b2b2b" />
<rect x="584" y="181" width="15" height="30" fill="#8a8a8a"/><rect x="552" y="214" width="30" height="15" fill="#e6e6e6"/>
<path d="M579 187.5 Q564 187.5 564 200" fill="none" stroke="#0a9a0a" stroke-width="5.2"/><path d="M555.4 199 L572.5 199 L563.9 207.6Z" fill="#0a9a0a"/>
<rect x="675" y="181" width="15" height="30" fill="#8a8a8a"/><rect x="693" y="214" width="30" height="15" fill="#e6e6e6"/>
<path d="M696 187.5 Q711 187.5 711 200" fill="none" stroke="#0a9a0a" stroke-width="5.2"/><path d="M702.3 199 L719.7 199 L710.8 207.6Z" fill="#0a9a0a"/>
<path d="M818.7 190.2 L801.3 219.5 H818.7Z" fill="#8a8a8a"/><path d="M828.3 190.2 L845.7 219.5 H828.3Z" fill="#e6e6e6"/>
<path d="M823.3 184 V226" stroke="#e6e6e6" stroke-width="3.4" stroke-dasharray="5.5 3"/>
<path d="M929.9 184 L959.8 199 V201.6 H929.9Z" fill="#8a8a8a"/><path d="M929.9 211 H959.8 V214 L929.9 228.9Z" fill="#e6e6e6"/>
<path d="M924 206.4 H966" stroke="#e6e6e6" stroke-width="3.4" stroke-dasharray="6 3"/>
<rect x="1015" y="155" width="2" height="100" fill="#2b2b2b" />
<rect x="1065" y="184" width="39" height="6" fill="#e6e6e6" />
<rect x="1065" y="196" width="15" height="6" fill="#8a8a8a" />
<rect x="1065" y="208" width="15" height="6" fill="#8a8a8a" />
<rect x="1065" y="220" width="15" height="6" fill="#8a8a8a" />
<path d="M1083 226 V206 M1077 207 L1086 195 L1095 207Z" fill="#0a9a0a" stroke="none"/><rect x="1083" y="204" width="6" height="22" fill="#0a9a0a"/><path d="M1076 206 L1086 194 L1096 206Z" fill="#0a9a0a"/>
<rect x="1188" y="184" width="15" height="6" fill="#8a8a8a" />
<rect x="1188" y="196" width="39" height="6" fill="#e6e6e6" />
<rect x="1188" y="208" width="15" height="6" fill="#8a8a8a" />
<rect x="1188" y="220" width="15" height="6" fill="#8a8a8a" />
<rect x="1215" y="213" width="6" height="13" fill="#0a9a0a"/><path d="M1209 214 L1218 203 L1227 214Z" fill="#0a9a0a"/>
<rect x="1311" y="184" width="15" height="6" fill="#8a8a8a" />
<rect x="1311" y="196" width="15" height="6" fill="#8a8a8a" />
<rect x="1311" y="208" width="39" height="6" fill="#e6e6e6" />
<rect x="1311" y="220" width="15" height="6" fill="#8a8a8a" />
<rect x="1338" y="184" width="6" height="12" fill="#0a9a0a"/><path d="M1332 195 L1341 206 L1350 195Z" fill="#0a9a0a"/>
<rect x="1434" y="184" width="15" height="6" fill="#8a8a8a" />
<rect x="1434" y="196" width="15" height="6" fill="#8a8a8a" />
<rect x="1434" y="208" width="15" height="6" fill="#8a8a8a" />
<rect x="1434" y="220" width="39" height="6" fill="#e6e6e6" />
<rect x="1461" y="184" width="6" height="20" fill="#0a9a0a"/><path d="M1455 203 L1464 214 L1473 203Z" fill="#0a9a0a"/>
<rect x="1523" y="155" width="2" height="100" fill="#2b2b2b" />
<rect x="1579.9" y="156.1" width="302.0" height="98.3" rx="14" fill="#2d2d2d" stroke="#1e1e1e" stroke-width="3" />
<rect x="1779.0" y="157.6" width="2.7" height="95.3" fill="#282828"/>
<rect x="1830.1" y="157.6" width="2.7" height="95.3" fill="#282828"/>
<rect x="1788.0" y="199.1" width="36.1" height="3" fill="#000"/>
<rect x="1788.0" y="202.1" width="36.1" height="6" fill="#dcdcd8"/>
<rect x="1837.1" y="199.1" width="38.3" height="3" fill="#000"/>
<rect x="1853.2" y="182.9" width="6" height="3" fill="#000"/>
<rect x="1837.1" y="202.1" width="38.3" height="6" fill="#dcdcd8"/>
<rect x="1853.2" y="185.9" width="6" height="38.3" fill="#dcdcd8"/>
<rect x="1937.6" y="156.1" width="301.4" height="98.3" rx="14" fill="#2d2d2d" stroke="#1e1e1e" stroke-width="3" />
<rect x="2136.7" y="157.6" width="2.7" height="95.3" fill="#282828"/>
<rect x="2187.8" y="157.6" width="2.7" height="95.3" fill="#282828"/>
<rect x="2145.7" y="199.1" width="36.1" height="3" fill="#000"/>
<rect x="2145.7" y="202.1" width="36.1" height="6" fill="#dcdcd8"/>
<rect x="2194.8" y="199.1" width="37.7" height="3" fill="#000"/>
<rect x="2210.7" y="183.3" width="6" height="3" fill="#000"/>
<rect x="2194.8" y="202.1" width="37.7" height="6" fill="#dcdcd8"/>
<rect x="2210.7" y="186.3" width="6" height="37.7" fill="#dcdcd8"/>
<rect x="2307.2" y="156.1" width="301.3" height="98.3" rx="14" fill="#2d2d2d" stroke="#1e1e1e" stroke-width="3" />
<rect x="2506.5" y="157.6" width="2.7" height="95.3" fill="#282828"/>
<rect x="2557.6" y="157.6" width="2.7" height="95.3" fill="#282828"/>
<rect x="2515.5" y="199.1" width="36.1" height="3" fill="#000"/>
<rect x="2515.5" y="202.1" width="36.1" height="6" fill="#dcdcd8"/>
<rect x="2564.6" y="199.1" width="37.4" height="3" fill="#000"/>
<rect x="2580.3" y="183.4" width="6" height="3" fill="#000"/>
<rect x="2564.6" y="202.1" width="37.4" height="6" fill="#dcdcd8"/>
<rect x="2580.3" y="186.4" width="6" height="37.4" fill="#dcdcd8"/>
<rect x="2793.5" y="156.1" width="298.5" height="98.3" rx="14" fill="#2d2d2d" stroke="#1e1e1e" stroke-width="3" />
<rect x="2993.0" y="157.6" width="2.7" height="95.3" fill="#282828"/>
<rect x="3044.2" y="157.6" width="2.7" height="95.3" fill="#282828"/>
<rect x="3002.0" y="199.1" width="36.2" height="3" fill="#000"/>
<rect x="3002.0" y="202.1" width="36.2" height="6" fill="#dcdcd8"/>
<rect x="3051.2" y="199.1" width="34.3" height="3" fill="#000"/>
<rect x="3065.3" y="184.9" width="6" height="3" fill="#000"/>
<rect x="3051.2" y="202.1" width="34.3" height="6" fill="#dcdcd8"/>
<rect x="3065.3" y="187.9" width="6" height="34.3" fill="#dcdcd8"/>
<defs><linearGradient id="lockg" x1="0" y1="0" x2="0" y2="1"><stop offset="0" stop-color="#1f4a80"/><stop offset="1" stop-color="#2a4769"/></linearGradient></defs>
<rect x="2628.0" y="156.1" width="94.5" height="98.3" rx="14" fill="url(#lockg)" stroke="#1e1e1e" stroke-width="3" />
<rect x="2664" y="201" width="32" height="25" fill="#e6e6e6"/><path d="M2671 202 V193 Q2671 184 2680 184 Q2689 184 2689 193 V202" fill="none" stroke="#e6e6e6" stroke-width="6"/>
<rect x="3112.9" y="156.9" width="178.1" height="99.1" rx="14" fill="#070707" />
<rect x="3114.4" y="156.4" width="175.1" height="96.1" rx="14" fill="url(#btng)" stroke="#1c1c1c" stroke-width="3" />
<path d="M3220.0 191.0H3256.0V194.0H3220.0Z" fill="#111"/>
<path d="M3220.0 194.0H3256.0L3238.0 214.0Z" fill="#eeeeec"/>
<rect x="3307.5" y="155" width="2" height="100" fill="#2b2b2b" />
<rect x="3326.0" y="156.9" width="154.0" height="99.1" rx="14" fill="#070707" />
<rect x="3327.5" y="156.4" width="151.0" height="96.1" rx="14" fill="url(#btng)" stroke="#1c1c1c" stroke-width="3" />
<path d="M3409.0 191.0H3445.0V194.0H3409.0Z" fill="#111"/>
<path d="M3409.0 194.0H3445.0L3427.0 214.0Z" fill="#eeeeec"/>
<path d="M3360 183 H3397 V205 H3389 V191 H3360Z" fill="#e6e6e6"/><rect x="3360" y="195" width="25" height="6" fill="#e6e6e6"/>
<path d="M3360 219 h8 v8 h-8z M3372 219 h8 v8 h-8z M3384 219 h6 v8 h-6z" fill="#e6e6e6"/><path d="M3388 212 L3397 223 L3388 234Z" fill="#e6e6e6"/>
<path d="M3640 184.5 A 20.5 20.5 0 0 1 3640 225.5" fill="none" stroke="#e6e6e6" stroke-width="9"/>
<circle cx="3629.5" cy="185" r="4.5" fill="#0a9a0a"/><circle cx="3629.5" cy="224" r="4.5" fill="#0a9a0a"/>
<path d="M3634 195 L3621 207 L3632 207 L3620 214" fill="none" stroke="#e6e6e6" stroke-width="3.5"/>
<rect x="3715.7" y="156.9" width="106.8" height="99.1" rx="14" fill="#070707" />
<rect x="3717.2" y="156.4" width="103.8" height="96.1" rx="14" fill="url(#btng)" stroke="#1c1c1c" stroke-width="3" />
<path d="M3778 185 V223 L3759 204Z" fill="#e6e6e6"/>
<defs><linearGradient id="selg" x1="0" y1="0" x2="0" y2="1"><stop offset="0" stop-color="#21497f"/><stop offset="1" stop-color="#1f3d68"/></linearGradient></defs>
<rect x="5.0" y="270.0" width="67.5" height="91.0" rx="13" fill="url(#selg)" stroke="#1c1c1c" stroke-width="3" />
<path d="M24 297 L27 333 L37 324 L45 338 L52 334 L45 321 L57 316 Z" fill="#1f4577" stroke="#e6e6e6" stroke-width="5" stroke-linejoin="round"/>
<path d="M18.5 429 Q22 397 57 393" fill="none" stroke="#8a8a8a" stroke-width="3"/>
<rect x="24" y="396" width="12" height="12" fill="#333" stroke="#e6e6e6" stroke-width="6"/>
<path d="M45 415 L59 424 L45 432 Z" fill="#e6e6e6"/>
<circle cx="32.5" cy="501" r="13" fill="none" stroke="#e6e6e6" stroke-width="5"/>
<rect x="36" y="505" width="21" height="20" fill="none" stroke="#e6e6e6" stroke-width="6"/>
<rect x="0" y="559" width="78" height="2" fill="#2c2c2c" />
<rect x="21" y="595" width="36" height="36" rx="4" fill="#ff148c" stroke="#e6e6e6" stroke-width="6"/>
<circle cx="38.4" cy="708.7" r="17.5" fill="#c4207a" stroke="#e6e6e6" stroke-width="6"/>
<path d="M31 789 L45 798 L41 815 L22 815 L17 798 Z" fill="#8b1e5c" stroke="#e6e6e6" stroke-width="5" stroke-linejoin="round"/>
<path d="M47 795 L51 806 L62 806 L53 813 L57 824 L47 817 L37 824 L41 813 L32 806 L43 806 Z" fill="#5a2040" stroke="#e6e6e6" stroke-width="4" stroke-linejoin="round"/>
<path d="M38.4 880 L57 890 L57 911 L38.4 922 L20 911 L20 890 Z" fill="#e6e6e6"/>
<path d="M38.4 885 L53 893 L38.4 901 L24 893 Z" fill="#552a44"/>
<path d="M24 896 L36.5 903.5 L36.5 917 L24 909 Z" fill="#ff148c"/>
<path d="M53 896 L40.5 903.5 L40.5 917 L53 909 Z" fill="#8b1e5c"/>
<path d="M54 1013 Q62 995 52 984 Q38 972 25 985 Q15 998 26 1010 Q38 1018 45 1005 Q49 993 38 991 Q31 992 33 1000" fill="none" stroke="#e6e6e6" stroke-width="6" stroke-linecap="round"/>
<rect x="0" y="1048" width="78" height="2" fill="#2c2c2c" />
<path d="M22 1104 Q28 1084 51 1082" fill="none" stroke="#9a9a9a" stroke-width="3"/>
<circle cx="20.7" cy="1083.6" r="6" fill="#0a9a0a"/><rect x="19" y="1084" width="3.5" height="22" fill="#0a9a0a"/><rect x="15.3" y="1105" width="12" height="11" fill="#0a9a0a"/>
<path d="M29.5 1124 L38 1101 L50 1093 L62 1097 L59 1109 L51 1120 Z" fill="#e6e6e6"/><path d="M37 1114 L46 1104 L51 1108 Z" fill="#333"/>
<path d="M23.7 1176.5 C19 1176 17 1181 18.5 1184 C20 1188 24 1187.5 27 1185 C31 1181 34 1179 37 1179.5 C41 1180.5 42 1185 38 1187.5 C34 1190 28 1191.5 25 1194.5 C22 1197.5 21 1200 20.7 1204" fill="none" stroke="#0a9a0a" stroke-width="3.8"/>
<path d="M29.6 1205 L46.1 1188.4 L53.8 1196.1 L37.3 1212.7 Z M49.1 1185.5 L54.4 1180.2 Q56.5 1178.5 59 1180.5 L61.5 1183.5 Q63 1186 61 1188 L56.8 1192.6 Z" fill="#e6e6e6"/><path d="M26 1208 L34.3 1215.6 L21.9 1220.1 Z" fill="#0a9a0a"/>
<path d="M27 1272 Q38 1280 29 1288 Q20 1295 32 1296" fill="none" stroke="#0a9a0a" stroke-width="3.5"/>
<path d="M38 1298 L59 1275 L61 1277 L43 1303 Z" fill="#e6e6e6"/><path d="M33 1300 L41 1307 L37 1310 L30 1303 Z" fill="#e6e6e6"/><path d="M29 1304 L34 1310 Q28 1314 18 1312 Q24 1308 29 1304Z" fill="#0a9a0a"/>
<path d="M15 1408 L27 1374 L38 1374 L51 1408 L42 1408 L39.5 1400 L26 1400 L23.5 1408 Z M28 1393 L37.5 1393 L33 1380 Z" fill="#e6e6e6" fill-rule="evenodd"/>
<rect x="57" y="1365.5" width="6" height="47" fill="#0a9a0a" />
<rect x="0" y="1441" width="78" height="2" fill="#2c2c2c" />
<defs><linearGradient id="grdg" x1="0" y1="0" x2="1" y2="1"><stop offset="0" stop-color="#069eec"/><stop offset="0.22" stop-color="#069eec"/><stop offset="0.22" stop-color="#1fa6e8"/><stop offset="0.38" stop-color="#1fa6e8"/><stop offset="0.38" stop-color="#4cb4e6"/><stop offset="0.54" stop-color="#4cb4e6"/><stop offset="0.54" stop-color="#70c2ea"/><stop offset="0.7" stop-color="#70c2ea"/><stop offset="0.7" stop-color="#98d0ea"/><stop offset="0.8" stop-color="#98d0ea"/><stop offset="0.8" stop-color="#b8dcec"/><stop offset="0.88" stop-color="#b8dcec"/><stop offset="0.88" stop-color="#e8e8e8"/><stop offset="1" stop-color="#e8e8e8"/></linearGradient><radialGradient id="meshg" r="0.55"><stop offset="0" stop-color="#05a2f6"/><stop offset="0.45" stop-color="#0a78c0"/><stop offset="0.85" stop-color="#27485e"/><stop offset="1" stop-color="#333"/></radialGradient></defs>
<rect x="16.6" y="1472.5" width="44.9" height="45.2" rx="2.5" fill="#333" stroke="#eeeeee" stroke-width="3.2"/><rect x="21" y="1477" width="36" height="36" fill="url(#grdg)"/>
<rect x="17" y="1569" width="43.5" height="43" rx="1.5" fill="url(#meshg)" stroke="#eeeeee" stroke-width="3.5"/>
<path d="M38.8 1590.6 C33 1586 33 1576 41 1569 M38.8 1590.6 C43 1585 53 1585 60.5 1592 M38.8 1590.6 C44.6 1595 44.6 1605 36.5 1612 M38.8 1590.6 C34 1596 24 1596 17 1589" fill="none" stroke="#e6e6e6" stroke-width="3.5"/>
<path d="M24.6 1666 Q18 1676 19 1680 Q20 1686 24.6 1686 Q29 1686 30 1680 Q31 1675 24.6 1666Z" fill="#0a8ee6"/>
<path d="M26 1700 L44 1682 L51 1689 L33 1707 Q28 1710 25 1707 Q23 1704 26 1700Z" fill="none" stroke="#e6e6e6" stroke-width="3.5"/>
<path d="M41 1679 L54 1692 L51 1695 L38 1682Z M47 1680 L54 1673 Q58 1669 61 1673 Q64 1676 60 1680 L53 1687Z" fill="#e6e6e6"/>
<path d="M28.5 1781.5 L45.7 1764.5 L61.8 1780 L45.7 1796 Q44.5 1797 43 1796 L33 1785 Q31 1784 28.5 1781.5 Z" fill="#e6e6e6"/><path d="M35.9 1779.8 L45.7 1769.6 L55.9 1779.8 Z" fill="#333"/><path d="M45.5 1765 L50 1761" stroke="#e6e6e6" stroke-width="4" stroke-linecap="round"/>
<path d="M25.3 1786.3 Q18 1795 18 1800 V1804 H32.6 V1800 Q32.6 1795 25.3 1786.3Z" fill="#0a8ee6"/>
<rect x="105" y="298" width="30.5" height="24" fill="#e6e6e6"/>
<path d="M126 298 V289 Q126 280 134 280 Q141 280 141 289 V295" fill="none" stroke="#0d0d0d" stroke-width="8"/>
<path d="M126 298 V290 Q126 282 134 282 Q141 282 141 290 V296" fill="none" stroke="#e6e6e6" stroke-width="5"/>
<path d="M2411 318.7 H2440 L2433 328 H2404 Z" fill="#0a8ee6"/>
<path d="M2411 334 H2440 L2433 343.3 H2404 Z" fill="#7cc8f0"/>
<path d="M2411 349 H2440 L2433 358.3 H2404 Z" fill="#e6e6e6"/>
<rect x="2597.5" y="314.8" width="44.6" height="44" fill="none" stroke="#e6e6e6" stroke-width="3.5"/>
<rect x="2602" y="319.3" width="36" height="5.5" fill="#0a9a0a" />
<path d="M2613 332 L2604 342 L2613 352 M2626 332 L2635 342 L2626 352" fill="none" stroke="#e6e6e6" stroke-width="3.5"/>
<path d="M2789.5 348 V314.5 H2824" fill="none" stroke="#e6e6e6" stroke-width="3"/>
<path d="M2806 341 L2831 316 Q2835 314 2834 319 L2811 346 Z" fill="#e6e6e6"/><path d="M2801 345 L2807 350 Q2802 357 2793 357 Q2797 350 2801 345Z" fill="#0a8ee6"/>
<path d="M2986 319 H3022.5 V330 H3019 Q3017 324 3011 324 H3008 V350 Q3008 352 3013 352 V355 H2995 V352 Q3000 352 3000 350 V324 H2997 Q2991 324 2989 330 H2986 Z" fill="#e6e6e6"/>
<path d="M3211 345 V328 L3202 319 H3185 Q3181 319 3181 323 V351 Q3181 355 3185 355 H3195" fill="none" stroke="#e6e6e6" stroke-width="6" stroke-linejoin="round"/>
<path d="M3197 341 L3209 357" stroke="#e6e6e6" stroke-width="8"/><circle cx="3194" cy="336" r="9" fill="#e6e6e6"/><path d="M3186 329 L3193 336 L3197 332 L3190 325 Z" fill="#262626"/><circle cx="3194" cy="336" r="3" fill="#262626"/>
<path d="M3246 326 L3266 347 M3266 326 L3246 347" stroke="#8a8a8a" stroke-width="6"/>
<path d="M3382 319 Q3382 313 3388 313 H3404 L3418 327 V336 H3411 V331 H3400 V320 H3389 V351 H3411 V344 H3418 V352 Q3418 358 3412 358 H3388 Q3382 358 3382 352 Z" fill="#e6e6e6"/>
<rect x="3403" y="337" width="16" height="6" fill="#0a9a0a"/><path d="M3417 330 L3430 340 L3417 350 Z" fill="#0a9a0a"/>
<rect x="3594.8" y="292.0" width="90.5" height="90.0" rx="12" fill="#2e2e2e" />
<path d="M3622 325 L3640 343 L3658 325" fill="none" stroke="#1a1a1a" stroke-width="6" transform="translate(0 -3)"/>
<path d="M3622 325 L3640 343 L3658 325" fill="none" stroke="#999999" stroke-width="6"/>
<path d="M3745 320 Q3745 315.6 3750 315.6 H3766 L3781 331 V350 Q3781 355 3776 355 H3750 Q3745 355 3745 350 Z M3751 321 V349 H3775 V332 H3765 V321 Z" fill="#e6e6e6" fill-rule="evenodd"/>
<path d="M3784 307 L3786.5 313.5 L3793 313.7 L3788 318 L3790 324.5 L3784 320.8 L3778 324.5 L3780 318 L3775 313.7 L3781.5 313.5 Z" fill="#0a9a0a"/>
<path d="M3744 428 Q3744 422 3750 422 H3763 L3767 428 H3781 Q3786 428 3786 433 V438 H3756 L3751 450 V463 H3744 Z" fill="#e6e6e6"/><path d="M3756 441 H3794 L3787 463 H3748 Z" fill="#e6e6e6"/>
<path d="M3748 558 L3756 548 H3766 V555 H3759 L3756 560 V571 H3783 V560 L3780 555 H3773 V548 H3783 L3791 558 V578 H3748 Z" fill="#e6e6e6"/><rect x="3760" y="563" width="19" height="3" fill="#333"/>
<rect x="3766" y="529" width="7" height="18" fill="#0a9a0a"/><path d="M3758 545 L3769.5 557 L3781 545 Z" fill="#0a9a0a"/>
<path d="M3755 651 Q3755 644 3761 644 H3778 Q3784 644 3784 651 V653 H3755 Z" fill="#e6e6e6"/><path d="M3748 658 Q3748 654 3752 654 H3787 Q3791 654 3791 658 V674 H3784 V666 H3755 V674 H3748 Z" fill="#b4b4b4"/><rect x="3756" y="663" width="27" height="19" fill="#e6e6e6"/>
<rect x="3715" y="725" width="107" height="2" fill="#2c2c2c" />
<path d="M3760 769 Q3760 764 3765 764 H3777 L3791 778 V803 Q3791 808 3786 808 H3765 Q3760 808 3760 803 V797 H3766 V802 H3785 V780 H3775 V770 H3766 V781 H3760 Z" fill="#e6e6e6"/>
<rect x="3748" y="786" width="17" height="6" fill="#0a9a0a"/><path d="M3763 779 L3775 789 L3763 799 Z" fill="#0a9a0a"/>
<path d="M3745 882 Q3745 877 3750 877 H3763 L3777 891 V896 H3771 V893 H3761 V883 H3751 V914 H3771 V907 H3777 V915 Q3777 920 3772 920 H3750 Q3745 920 3745 915 Z" fill="#e6e6e6"/>
<rect x="3766" y="898" width="17" height="6" fill="#0a9a0a"/><path d="M3781 891 L3793.5 901 L3781 911 Z" fill="#0a9a0a"/>
<rect x="3715" y="960" width="107" height="2" fill="#2c2c2c" />
<path d="M3760 1008 H3772 Q3785 1008 3785 1021 Q3785 1034 3772 1034 H3768" fill="none" stroke="#e6e6e6" stroke-width="6"/><path d="M3762 999 L3749 1010 L3762 1021 Z" fill="#e6e6e6"/>
<path d="M3776 1119 H3764 Q3751 1119 3751 1132 Q3751 1145 3764 1145 H3768" fill="none" stroke="#8a8a8a" stroke-width="6"/><path d="M3774 1110 L3787 1121 L3774 1132 Z" fill="#8a8a8a"/>
<rect x="3715" y="1192" width="107" height="2" fill="#2c2c2c" />
<rect x="3744.5" y="1231.7" width="32" height="32" fill="#e6e6e6"/><rect x="3757" y="1244" width="40" height="40" fill="#333"/><rect x="3760" y="1247" width="33.5" height="32.6" fill="#e6e6e6"/>
<path d="M3752 1342 L3778 1375 M3786 1342 L3760 1375" stroke="#e6e6e6" stroke-width="5"/><circle cx="3753" cy="1382" r="7" fill="none" stroke="#e6e6e6" stroke-width="5"/><circle cx="3785" cy="1382" r="7" fill="none" stroke="#e6e6e6" stroke-width="5"/>
<rect x="3746" y="1460" width="40" height="40" fill="none" stroke="#e6e6e6" stroke-width="3"/><rect x="3757" y="1455" width="18" height="8" rx="2" fill="#e6e6e6"/><path d="M3752 1466 H3780 V1488 L3772 1496 H3752 Z" fill="#e6e6e6"/>
<rect x="3715" y="1538" width="107" height="2" fill="#2c2c2c" />
<rect x="3715.8" y="1552.5" width="105.7" height="99.7" rx="14" fill="#070707" />
<rect x="3717.3" y="1552.0" width="102.7" height="96.7" rx="14" fill="url(#btng)" stroke="#1c1c1c" stroke-width="3" />
<path d="M3750.6 1589.2H3787.3V1592.2H3750.6Z" fill="#111"/>
<path d="M3750.6 1592.2H3787.3L3768.9 1609.0Z" fill="#eeeeec"/>
<rect x="3715" y="1661" width="107" height="2" fill="#2c2c2c" />
<rect x="525.2" y="1918.3" width="209.4" height="110.2" rx="14" fill="#2d2d2d" stroke="#1e1e1e" stroke-width="3" />
<rect x="632.5" y="1920" width="2.5" height="100" fill="#282828" />
<rect x="684.8" y="1920" width="2.5" height="100" fill="#282828" />
<rect x="641.8" y="1958.5" width="35.8" height="3" fill="#000"/>
<rect x="641.8" y="1961.5" width="35.8" height="6" fill="#dcdcd8"/>
<rect x="693.3" y="1961.5" width="35.4" height="6" fill="#595959"/>
<rect x="708.0" y="1946.8" width="6" height="35.4" fill="#595959"/>
<rect x="781" y="1939.5" width="11" height="50" fill="#ffffff" />
<path d="M958 1966 Q977.5 1946 997 1966 Q977.5 1986 958 1966 Z" fill="none" stroke="#8a8a8a" stroke-width="4.5"/><circle cx="977.5" cy="1966" r="7" fill="#8a8a8a"/>
<path d="M965 1950 L968 1955 M977.5 1946 V1952 M990 1950 L987 1955" stroke="#8a8a8a" stroke-width="3"/>
<rect x="1070.3" y="1962" width="25" height="24" fill="#8a8a8a"/><path d="M1090 1962 V1955 Q1090 1946 1099 1946 Q1108 1946 1108 1955 V1960" fill="none" stroke="#8a8a8a" stroke-width="5"/>
<rect x="1143" y="1925" width="2" height="80" fill="#2b2b2b" />
<path d="M2725.8 1948 V1984 L2706.6 1966 Z" fill="#8a8a8a"/>
<rect x="2770.5" y="1917.6" width="107.1" height="113.4" rx="14" fill="#070707" />
<rect x="2772.0" y="1917.1" width="104.1" height="110.4" rx="14" fill="url(#btng)" stroke="#1c1c1c" stroke-width="3" />
<path d="M2806.5 1957 H2841.5 L2824 1974.6 Z" fill="#8a8a8a"/>
<path d="M2922.7 1948 V1984 L2941.9 1966 Z" fill="#8a8a8a"/>
<rect x="2987" y="1925" width="2" height="80" fill="#2b2b2b" />
<rect x="3254.9" y="1917.3" width="229.7" height="111.2" rx="14" fill="#2d2d2d" stroke="#1e1e1e" stroke-width="3" />
<rect x="3382.5" y="1919" width="2.5" height="100" fill="#282828" />
<rect x="3434.3" y="1919" width="2.5" height="100" fill="#282828" />
<rect x="3389.9" y="1958.9" width="37.0" height="3" fill="#000"/>
<rect x="3389.9" y="1961.9" width="37.0" height="6" fill="#dcdcd8"/>
<rect x="3441.9" y="1958.9" width="36.7" height="3" fill="#000"/>
<rect x="3457.2" y="1943.6" width="6" height="3" fill="#000"/>
<rect x="3441.9" y="1961.9" width="36.7" height="6" fill="#dcdcd8"/>
<rect x="3457.2" y="1946.6" width="6" height="36.7" fill="#dcdcd8"/>
<rect x="3560.8" y="1917.3" width="248.3" height="111.2" rx="14" fill="#2d2d2d" stroke="#1e1e1e" stroke-width="3" />
<rect x="3705.7" y="1919" width="2.5" height="100" fill="#282828" />
<rect x="3757" y="1919" width="2.5" height="100" fill="#282828" />
<rect x="3714.0" y="1958.9" width="37.0" height="3" fill="#000"/>
<rect x="3714.0" y="1961.9" width="37.0" height="6" fill="#dcdcd8"/>
<rect x="3765.0" y="1958.9" width="37.0" height="3" fill="#000"/>
<rect x="3780.5" y="1943.4" width="6" height="3" fill="#000"/>
<rect x="3765.0" y="1961.9" width="37.0" height="6" fill="#dcdcd8"/>
<rect x="3780.5" y="1946.4" width="6" height="37.0" fill="#dcdcd8"/>
<rect x="2497.7" y="571.5" width="291.9" height="98.0" rx="14" fill="#070707" />
<rect x="2499.2" y="571.0" width="288.9" height="95.0" rx="14" fill="url(#btng)" stroke="#1c1c1c" stroke-width="3" />
<path d="M2718.8 606.0H2755.0V609.0H2718.8Z" fill="#111"/>
<path d="M2718.8 609.0H2755.0L2736.9 628.0Z" fill="#eeeeec"/>
<rect x="2797.7" y="571.5" width="177.9" height="98.0" rx="14" fill="#070707" />
<rect x="2799.2" y="571.0" width="174.9" height="95.0" rx="14" fill="url(#btng)" stroke="#1c1c1c" stroke-width="3" />
<path d="M2904.7 606.0H2941.0V609.0H2904.7Z" fill="#111"/>
<path d="M2904.7 609.0H2941.0L2922.8 628.0Z" fill="#eeeeec"/>
<rect x="2499.2" y="684.6" width="474.9" height="97.0" rx="14" fill="#2d2d2d" stroke="#1e1e1e" stroke-width="3" />
<rect x="2871.5" y="686.1" width="2.7" height="94.0" fill="#282828"/>
<rect x="2924.2" y="686.1" width="2.7" height="94.0" fill="#282828"/>
<rect x="2880.5" y="726.4" width="37.7" height="3" fill="#000"/>
<rect x="2880.5" y="729.4" width="37.7" height="6" fill="#dcdcd8"/>
<rect x="2931.2" y="726.4" width="36.4" height="3" fill="#000"/>
<rect x="2946.4" y="711.2" width="6" height="3" fill="#000"/>
<rect x="2931.2" y="729.4" width="36.4" height="6" fill="#dcdcd8"/>
<rect x="2946.4" y="714.2" width="6" height="36.4" fill="#dcdcd8"/>
<rect x="2499.2" y="798.2" width="474.9" height="97.0" rx="14" fill="#2d2d2d" stroke="#1e1e1e" stroke-width="3" />
<rect x="2871.5" y="799.7" width="2.7" height="94.0" fill="#282828"/>
<rect x="2924.2" y="799.7" width="2.7" height="94.0" fill="#282828"/>
<rect x="2880.5" y="840.0" width="37.7" height="3" fill="#000"/>
<rect x="2880.5" y="843.0" width="37.7" height="6" fill="#dcdcd8"/>
<rect x="2931.2" y="840.0" width="36.4" height="3" fill="#000"/>
<rect x="2946.4" y="824.8" width="6" height="3" fill="#000"/>
<rect x="2931.2" y="843.0" width="36.4" height="6" fill="#dcdcd8"/>
<rect x="2946.4" y="827.8" width="6" height="36.4" fill="#dcdcd8"/>
<rect x="2499.2" y="1134.7" width="474.9" height="97.0" rx="14" fill="#2d2d2d" stroke="#1e1e1e" stroke-width="3" />
<rect x="2871.5" y="1136.2" width="2.7" height="94.0" fill="#282828"/>
<rect x="2924.2" y="1136.2" width="2.7" height="94.0" fill="#282828"/>
<rect x="2880.5" y="1176.5" width="37.7" height="3" fill="#000"/>
<rect x="2880.5" y="1179.5" width="37.7" height="6" fill="#dcdcd8"/>
<rect x="2931.2" y="1176.5" width="36.4" height="3" fill="#000"/>
<rect x="2946.4" y="1161.3" width="6" height="3" fill="#000"/>
<rect x="2931.2" y="1179.5" width="36.4" height="6" fill="#dcdcd8"/>
<rect x="2946.4" y="1164.3" width="6" height="36.4" fill="#dcdcd8"/>
<defs><linearGradient id="radg" x1="0" y1="0" x2="0" y2="1"><stop offset="0" stop-color="#444"/><stop offset="1" stop-color="#2a2a2a"/></linearGradient></defs>
<circle cx="2718.8" cy="949" r="22.5" fill="url(#radg)" stroke="#0e0e0e" stroke-width="3"/>
<path d="M2764 920.5 H2806 V964 L2792 977 H2764 Z" fill="none" stroke="#e6e6e6" stroke-width="3.5"/><path d="M2806 962 H2792 V977" fill="none" stroke="#e6e6e6" stroke-width="3.5"/>
<circle cx="2865.5" cy="949" r="23.5" fill="#1f6fd8"/><circle cx="2865.5" cy="949" r="12" fill="#ffffff"/>
<path d="M2918 928 H2960 V957 L2947 970 H2918 Z" fill="none" stroke="#e6e6e6" stroke-width="3.5"/><path d="M2960 955 H2946 V970" fill="none" stroke="#e6e6e6" stroke-width="3.5"/>
<rect x="2827.8" y="1003.3" width="147.8" height="98.7" rx="14" fill="#070707" />
<rect x="2829.3" y="1002.8" width="144.8" height="95.7" rx="14" fill="url(#btng)" stroke="#1c1c1c" stroke-width="3" />
<path d="M2889 1036 Q2887 1036 2887 1040 V1061 Q2887 1064 2890 1064 H2911 Q2914 1064 2914 1061 V1047 L2903 1036 Z M2893 1042 H2900 V1050 H2908 V1058 H2893 Z" fill="#e6e6e6" fill-rule="evenodd"/>
<path d="M2893 1030 H2909 L2901 1024Z M2893 1070 H2909 L2901 1076Z M2881 1042 V1058 L2875 1050Z M2920 1042 V1058 L2926 1050Z" fill="#0a9a0a"/>
<path d="M2386 1354.2 V1390.2 L2404.2 1372.2 Z" fill="#eeeeec"/>
<rect x="3353.0" y="571.5" width="177.7" height="98.0" rx="14" fill="#070707" />
<rect x="3354.5" y="571.0" width="174.7" height="95.0" rx="14" fill="url(#btng)" stroke="#1c1c1c" stroke-width="3" />
<path d="M3459.8 606.0H3495.5V609.0H3459.8Z" fill="#111"/>
<path d="M3459.8 609.0H3495.5L3477.7 628.0Z" fill="#eeeeec"/>
<defs><linearGradient id="shr" x1="0" y1="0" x2="1" y2="0"><stop offset="0" stop-color="#8a8a8a"/><stop offset="1" stop-color="#d0d0d0" stop-opacity="0"/></linearGradient><linearGradient id="shb" x1="0" y1="0" x2="0" y2="1"><stop offset="0" stop-color="#8a8a8a"/><stop offset="1" stop-color="#d0d0d0" stop-opacity="0"/></linearGradient></defs>
<rect x="3039.7" y="681.9" width="492.5" height="395.4" rx="4" fill="#d0d0d0"/>
<defs><filter id="blur6" x="-20%" y="-20%" width="140%" height="140%"><feGaussianBlur stdDeviation="6"/></filter></defs>
<rect x="3118" y="730" width="356" height="319" fill="#000" opacity="0.45" filter="url(#blur6)"/>
<rect x="3108.5" y="720" width="358" height="321.5" fill="#ffffff" stroke="#9a9a9a" stroke-width="2"/>
<path d="M3003 780 V768 Q3003 757 3011.5 757 Q3020 757 3020 768 V780 M3011.5 754 V765" fill="none" stroke="#e6e6e6" stroke-width="3"/>
<path d="M3003 800 V812 Q3003 823 3011.5 823 Q3020 823 3020 812 V800 M3011.5 815 V826" fill="none" stroke="#e6e6e6" stroke-width="3"/>
<circle cx="3011.5" cy="1182.6" r="6.5" fill="#e6e6e6"/>
<rect x="3041.5" y="1093.5" width="152.7" height="99.0" rx="14" fill="#070707" />
<rect x="3043.0" y="1093.0" width="149.7" height="96.0" rx="14" fill="url(#btng)" stroke="#1c1c1c" stroke-width="3" />
<rect x="3209.5" y="1093.5" width="153.0" height="99.0" rx="14" fill="#070707" />
<rect x="3211.0" y="1093.0" width="150.0" height="96.0" rx="14" fill="url(#btng)" stroke="#1c1c1c" stroke-width="3" />
<rect x="3377.9" y="1093.5" width="153.1" height="99.0" rx="14" fill="#070707" />
<rect x="3379.4" y="1093.0" width="150.1" height="96.0" rx="14" fill="url(#btng)" stroke="#1c1c1c" stroke-width="3" />
<rect x="3070.3" y="1105" width="95.4" height="68.4" rx="9" fill="#ffffff"/>
<defs><clipPath id="bcl"><rect x="3237.6" y="1105" width="95.4" height="68.4" rx="9"/></clipPath></defs>
<g clip-path="url(#bcl)"><rect x="3237.6" y="1105" width="95.4" height="68.4" fill="#000"/><rect x="3237.6" y="1105" width="48" height="68.4" fill="#7c7c7c"/><path d="M3255.6 1105.0h18v18h-18z M3237.6 1123.0h18v18h-18z M3273.6 1123.0h18v18h-18z M3255.6 1141.0h18v18h-18z M3237.6 1159.0h18v18h-18z M3273.6 1159.0h18v18h-18z" fill="#989898"/><rect x="3285.6" y="1105" width="50" height="68.4" fill="#000"/></g>
<rect x="3405" y="1105" width="95.4" height="68.4" rx="9" fill="#d0d0d0"/>
<defs><linearGradient id="cbg" x1="0" y1="0" x2="0" y2="1"><stop offset="0" stop-color="#444"/><stop offset="1" stop-color="#2c2c2c"/></linearGradient><linearGradient id="cbb" x1="0" y1="0" x2="0" y2="1"><stop offset="0" stop-color="#2277e0"/><stop offset="1" stop-color="#1b62c4"/></linearGradient></defs>
<rect x="3053.7" y="1287.1" width="44.5" height="44.5" rx="8" fill="url(#cbg)" stroke="#0e0e0e" stroke-width="3"/>
<rect x="3052.2" y="1348.3" width="47.5" height="47.5" rx="8" fill="url(#cbb)"/>
<path d="M3061.2 1373.3 L3071.2 1382.3 L3090.2 1362.3" fill="none" stroke="#fff" stroke-width="7"/>
<rect x="3088.2" y="1411.4" width="47.5" height="47.5" rx="8" fill="url(#cbb)"/>
<path d="M3097.2 1436.4 L3107.2 1445.4 L3126.2 1425.4" fill="none" stroke="#fff" stroke-width="7"/>
<rect x="3088.2" y="1474.0" width="47.5" height="47.5" rx="8" fill="url(#cbb)"/>
<path d="M3097.2 1499.0 L3107.2 1508.0 L3126.2 1488.0" fill="none" stroke="#fff" stroke-width="7"/>
<rect x="3053.7" y="1538.5" width="44.5" height="44.5" rx="8" fill="url(#cbg)" stroke="#0e0e0e" stroke-width="3"/>
<rect x="3052.2" y="1675.5" width="47.5" height="47.5" rx="8" fill="url(#cbb)"/>
<path d="M3061.2 1700.5 L3071.2 1709.5 L3090.2 1689.5" fill="none" stroke="#fff" stroke-width="7"/>
<rect x="3053.7" y="1739.5" width="44.5" height="44.5" rx="8" fill="url(#cbg)" stroke="#0e0e0e" stroke-width="3"/>
<defs><linearGradient id="pshr" x1="0" y1="0" x2="1" y2="0"><stop offset="0" stop-color="#9c9c9c"/><stop offset="1" stop-color="#d2d2d2"/></linearGradient><linearGradient id="pshb" x1="0" y1="0" x2="0" y2="1"><stop offset="0" stop-color="#9c9c9c"/><stop offset="1" stop-color="#d2d2d2"/></linearGradient><radialGradient id="holeg" cx="0.45" cy="0.45" r="0.6"><stop offset="0" stop-color="#f6f6f8"/><stop offset="0.7" stop-color="#e8eaee"/><stop offset="1" stop-color="#c8ccd4"/></radialGradient></defs>
<rect x="1236.3" y="870.6" width="568.6" height="510.5" fill="#000" opacity="0.4" filter="url(#blur6)"/>
<rect x="1228.3" y="862.6" width="568.6" height="510.5" fill="#0d5a9b"/>
<circle cx="1277.7" cy="905.3" r="25.5" fill="url(#holeg)"/>
<path d="M1259.7 923.3 A25.5 25.5 0 0 1 1295.7 887.3" fill="none" stroke="#2a3038" stroke-width="2.2" opacity="0.8"/>
<circle cx="1277.7" cy="905.3" r="20" fill="none" stroke="#ffffff" stroke-width="1.5" opacity="0.6"/>
<circle cx="1751.5" cy="905.4" r="25.5" fill="url(#holeg)"/>
<path d="M1733.5 923.4 A25.5 25.5 0 0 1 1769.5 887.4" fill="none" stroke="#2a3038" stroke-width="2.2" opacity="0.8"/>
<circle cx="1751.5" cy="905.4" r="20" fill="none" stroke="#ffffff" stroke-width="1.5" opacity="0.6"/>
<circle cx="1278.3" cy="1324" r="25.5" fill="url(#holeg)"/>
<path d="M1260.3 1342.0 A25.5 25.5 0 0 1 1296.3 1306.0" fill="none" stroke="#2a3038" stroke-width="2.2" opacity="0.8"/>
<circle cx="1278.3" cy="1324" r="20" fill="none" stroke="#ffffff" stroke-width="1.5" opacity="0.6"/>
<circle cx="1751.8" cy="1324.1" r="25.5" fill="url(#holeg)"/>
<path d="M1733.8 1342.1 A25.5 25.5 0 0 1 1769.8 1306.1" fill="none" stroke="#2a3038" stroke-width="2.2" opacity="0.8"/>
<circle cx="1751.8" cy="1324.1" r="20" fill="none" stroke="#ffffff" stroke-width="1.5" opacity="0.6"/>
<circle cx="1662.8" cy="910.8" r="35.6" fill="#1b1b1b"/><circle cx="1662.8" cy="910.8" r="23" fill="#ffffff"/>
<circle cx="1529.1" cy="1228" r="35.6" fill="#1b1b1b"/><circle cx="1529.1" cy="1228" r="23" fill="#ffffff"/>
<rect x="1460" y="873.2" width="141.8" height="300.1" fill="#1a1a1a"/>
<rect x="1484.3" y="880.8" width="96.9" height="285.4" fill="#2f2f2f"/>
<path d="M1484.3 880.8 L1493 889 V1158 L1484.3 1166.2 Z" fill="#3a3a3a"/>
<path d="M1581.2 880.8 L1572 889 V1158 L1581.2 1166.2 Z" fill="#050505"/>
<path d="M1484.3 880.8 H1581.2 L1572 889 H1493 Z" fill="#242424"/>
<path d="M1484.3 1166.2 H1581.2 L1572 1158 H1493 Z" fill="#262626"/>
<path d="M1473.2 893.1 H1483 H1489 V911.1 L1483 905.1 H1473.2 Z" fill="#8c8c8c"/><path d="M1591.9 893.1 H1582 H1576 V911.1 L1582 905.1 H1591.9 Z" fill="#8c8c8c"/>
<path d="M1473.2 928.6 H1483 L1489 922.6 V946.6 L1483 940.6 H1473.2 Z" fill="#8c8c8c"/><path d="M1591.9 928.6 H1582 L1576 922.6 V946.6 L1582 940.6 H1591.9 Z" fill="#8c8c8c"/>
<path d="M1473.2 964.0 H1483 L1489 958.0 V982.0 L1483 976.0 H1473.2 Z" fill="#8c8c8c"/><path d="M1591.9 964.0 H1582 L1576 958.0 V982.0 L1582 976.0 H1591.9 Z" fill="#8c8c8c"/>
<path d="M1473.2 999.5 H1483 L1489 993.5 V1017.5 L1483 1011.5 H1473.2 Z" fill="#8c8c8c"/><path d="M1591.9 999.5 H1582 L1576 993.5 V1017.5 L1582 1011.5 H1591.9 Z" fill="#8c8c8c"/>
<path d="M1473.2 1035.0 H1483 L1489 1029.0 V1053.0 L1483 1047.0 H1473.2 Z" fill="#8c8c8c"/><path d="M1591.9 1035.0 H1582 L1576 1029.0 V1053.0 L1582 1047.0 H1591.9 Z" fill="#8c8c8c"/>
<path d="M1473.2 1070.5 H1483 L1489 1064.5 V1088.5 L1483 1082.5 H1473.2 Z" fill="#8c8c8c"/><path d="M1591.9 1070.5 H1582 L1576 1064.5 V1088.5 L1582 1082.5 H1591.9 Z" fill="#8c8c8c"/>
<path d="M1473.2 1106.0 H1483 L1489 1100.0 V1124.0 L1483 1118.0 H1473.2 Z" fill="#8c8c8c"/><path d="M1591.9 1106.0 H1582 L1576 1100.0 V1124.0 L1582 1118.0 H1591.9 Z" fill="#8c8c8c"/>
<path d="M1473.2 1141.4 H1483 L1489 1135.4 V1153.4 H1473.2 Z" fill="#8c8c8c"/><path d="M1591.9 1141.4 H1582 L1576 1135.4 V1153.4 H1591.9 Z" fill="#8c8c8c"/>
<circle cx="1557.6" cy="1142.6" r="7.2" fill="#262626"/>
<path d="M1516 1166 A17 17 0 0 1 1550 1166" fill="none" stroke="#262626" stroke-width="6"/>
<path d="M1511 1138.4 H1531.5 V1126.3 M1511 1118.7 V1105.4 H1531.5 V1118.7 M1522.5 1105.4 V1115.6 H1531.5 M1511 1085.2 H1520.5 V1098.3 H1511 Z M1520.5 1085.2 H1531.5 V1087.5 M1511 1077.5 V1065 H1531.5 V1077.5 M1521.3 1065 V1074.4 M1511 1056.6 V1049 L1521.3 1043.3 L1531.5 1049 V1056.6 M1511 1051.3 H1531.5" fill="none" stroke="#e4e4e4" stroke-width="2.7" stroke-linecap="round" stroke-linejoin="round"/>
<rect x="1275.3" y="957.8" width="101.5" height="315.2" fill="#038103"/>
<rect x="1298.1" y="957.8" width="63.4" height="315.2" fill="#12b812"/>
<g transform="translate(1330.3 982.2)"><circle r="17.2" fill="#9a9a9a" stroke="#151515" stroke-width="1.2"/><path d="M-14 -9 L15 3 L12 9.5 L-16.5 -2.5 Z" fill="#626262"/><path d="M3 -16.5 A16.5 16.5 0 0 1 16.5 -1" fill="none" stroke="#d8d8d8" stroke-width="2.4"/></g>
<g transform="translate(1330.3 1033.5)"><circle r="17.2" fill="#9a9a9a" stroke="#151515" stroke-width="1.2"/><path d="M-14 -9 L15 3 L12 9.5 L-16.5 -2.5 Z" fill="#626262"/><path d="M3 -16.5 A16.5 16.5 0 0 1 16.5 -1" fill="none" stroke="#d8d8d8" stroke-width="2.4"/></g>
<g transform="translate(1330.3 1084.9)"><circle r="17.2" fill="#9a9a9a" stroke="#151515" stroke-width="1.2"/><path d="M-14 -9 L15 3 L12 9.5 L-16.5 -2.5 Z" fill="#626262"/><path d="M3 -16.5 A16.5 16.5 0 0 1 16.5 -1" fill="none" stroke="#d8d8d8" stroke-width="2.4"/></g>
<g transform="translate(1330.3 1143.8)"><circle r="17.2" fill="#9a9a9a" stroke="#151515" stroke-width="1.2"/><path d="M-14 -9 L15 3 L12 9.5 L-16.5 -2.5 Z" fill="#626262"/><path d="M3 -16.5 A16.5 16.5 0 0 1 16.5 -1" fill="none" stroke="#d8d8d8" stroke-width="2.4"/></g>
<g transform="translate(1330.3 1195.1)"><circle r="17.2" fill="#9a9a9a" stroke="#151515" stroke-width="1.2"/><path d="M-14 -9 L15 3 L12 9.5 L-16.5 -2.5 Z" fill="#626262"/><path d="M3 -16.5 A16.5 16.5 0 0 1 16.5 -1" fill="none" stroke="#d8d8d8" stroke-width="2.4"/></g>
<g transform="translate(1330.3 1246.1)"><circle r="17.2" fill="#9a9a9a" stroke="#151515" stroke-width="1.2"/><path d="M-14 -9 L15 3 L12 9.5 L-16.5 -2.5 Z" fill="#626262"/><path d="M3 -16.5 A16.5 16.5 0 0 1 16.5 -1" fill="none" stroke="#d8d8d8" stroke-width="2.4"/></g>
<rect x="1384.1" y="964.9" width="50" height="17.7" fill="#9e9470"/>
<rect x="1395.1" y="966.1999999999999" width="28" height="15.1" fill="#dcdcdc"/>
<rect x="1402.1" y="966.1999999999999" width="14" height="15.1" fill="#f4f4f4"/>
<circle cx="1409.1" cy="973.75" r="1.6" fill="#a0a0a0"/>
<rect x="1384.1" y="1025.9" width="50" height="17.7" fill="#9e9470"/>
<rect x="1395.1" y="1027.2" width="28" height="15.1" fill="#dcdcdc"/>
<rect x="1402.1" y="1027.2" width="14" height="15.1" fill="#f4f4f4"/>
<circle cx="1409.1" cy="1034.75" r="1.6" fill="#a0a0a0"/>
<rect x="1385.1" y="1071.9" width="50" height="17.7" fill="#9e9470"/>
<rect x="1396.1" y="1073.2" width="28" height="15.1" fill="#dcdcdc"/>
<rect x="1403.1" y="1073.2" width="14" height="15.1" fill="#f4f4f4"/>
<circle cx="1410.1" cy="1080.75" r="1.6" fill="#a0a0a0"/>
<rect x="1385.8" y="1131.7" width="50" height="17.7" fill="#9e9470"/>
<rect x="1396.8" y="1133.0" width="28" height="15.1" fill="#dcdcdc"/>
<rect x="1403.8" y="1133.0" width="14" height="15.1" fill="#f4f4f4"/>
<circle cx="1410.8" cy="1140.55" r="1.6" fill="#a0a0a0"/>
<rect x="1381.5" y="1221" width="94.3" height="82.4" fill="#1b1b1b"/>
<path d="M1696.3 963.9 H1717.9 L1725.4 971.4 V993.0 L1717.9 1000.5 H1696.3 L1688.8 993.0 V971.4 Z" fill="#484848"/>
<rect x="1700.8" y="975.9" width="12.6" height="12.6" fill="#7c7558"/>
<rect x="1702.8" y="977.9" width="8.6" height="8.6" fill="#a59e78"/>
<path d="M1696.3 1000.9 H1717.9 L1725.4 1008.4 V1030.0 L1717.9 1037.5 H1696.3 L1688.8 1030.0 V1008.4 Z" fill="#484848"/>
<rect x="1700.8" y="1012.9" width="12.6" height="12.6" fill="#7c7558"/>
<rect x="1702.8" y="1014.9" width="8.6" height="8.6" fill="#a59e78"/>
<path d="M1696.3 1038.3 H1717.9 L1725.4 1045.8 V1067.4 L1717.9 1074.9 H1696.3 L1688.8 1067.4 V1045.8 Z" fill="#484848"/>
<rect x="1700.8" y="1050.3" width="12.6" height="12.6" fill="#7c7558"/>
<rect x="1702.8" y="1052.3" width="8.6" height="8.6" fill="#a59e78"/>
<path d="M1696.3 1075.3 H1717.9 L1725.4 1082.8 V1104.4 L1717.9 1111.9 H1696.3 L1688.8 1104.4 V1082.8 Z" fill="#484848"/>
<rect x="1700.8" y="1087.3" width="12.6" height="12.6" fill="#7c7558"/>
<rect x="1702.8" y="1089.3" width="8.6" height="8.6" fill="#a59e78"/>
<path d="M1696.3 1112.3 H1717.9 L1725.4 1119.8 V1141.4 L1717.9 1148.9 H1696.3 L1688.8 1141.4 V1119.8 Z" fill="#484848"/>
<rect x="1700.8" y="1124.3" width="12.6" height="12.6" fill="#7c7558"/>
<rect x="1702.8" y="1126.3" width="8.6" height="8.6" fill="#a59e78"/>
<path d="M1696.3 1149.3 H1717.9 L1725.4 1156.8 V1178.4 L1717.9 1185.9 H1696.3 L1688.8 1178.4 V1156.8 Z" fill="#484848"/>
<rect x="1700.8" y="1161.3" width="12.6" height="12.6" fill="#7c7558"/>
<rect x="1702.8" y="1163.3" width="8.6" height="8.6" fill="#a59e78"/>
<path d="M1696.3 1186.7 H1717.9 L1725.4 1194.2 V1215.8 L1717.9 1223.3 H1696.3 L1688.8 1215.8 V1194.2 Z" fill="#484848"/>
<rect x="1700.8" y="1198.7" width="12.6" height="12.6" fill="#7c7558"/>
<rect x="1702.8" y="1200.7" width="8.6" height="8.6" fill="#a59e78"/>
<path d="M1696.3 1223.7 H1717.9 L1725.4 1231.2 V1252.8 L1717.9 1260.3 H1696.3 L1688.8 1252.8 V1231.2 Z" fill="#484848"/>
<rect x="1700.8" y="1235.7" width="12.6" height="12.6" fill="#7c7558"/>
<rect x="1702.8" y="1237.7" width="8.6" height="8.6" fill="#a59e78"/>
<path d="M1658.8 1186.7 H1680.4 L1687.9 1194.2 V1215.8 L1680.4 1223.3 H1658.8 L1651.3 1215.8 V1194.2 Z" fill="#484848"/>
<rect x="1663.3" y="1198.7" width="12.6" height="12.6" fill="#7c7558"/>
<rect x="1665.3" y="1200.7" width="8.6" height="8.6" fill="#a59e78"/>
<path d="M1658.8 1223.7 H1680.4 L1687.9 1231.2 V1252.8 L1680.4 1260.3 H1658.8 L1651.3 1252.8 V1231.2 Z" fill="#484848"/>
<rect x="1663.3" y="1235.7" width="12.6" height="12.6" fill="#7c7558"/>
<rect x="1665.3" y="1237.7" width="8.6" height="8.6" fill="#a59e78"/>
<path d="M1517.6 1311.6 H1539.2 L1546.7 1319.1 V1340.7 L1539.2 1348.2 H1517.6 L1510.1 1340.7 V1319.1 Z" fill="#484848"/>
<rect x="1522.1" y="1323.6" width="12.6" height="12.6" fill="#7c7558"/>
<rect x="1524.1" y="1325.6" width="8.6" height="8.6" fill="#a59e78"/>
<path d="M1554.6 1311.6 H1576.2 L1583.7 1319.1 V1340.7 L1576.2 1348.2 H1554.6 L1547.1 1340.7 V1319.1 Z" fill="#484848"/>
<rect x="1559.1" y="1323.6" width="12.6" height="12.6" fill="#7c7558"/>
<rect x="1561.1" y="1325.6" width="8.6" height="8.6" fill="#a59e78"/>
<path d="M1591.6 1311.6 H1613.2 L1620.7 1319.1 V1340.7 L1613.2 1348.2 H1591.6 L1584.1 1340.7 V1319.1 Z" fill="#484848"/>
<rect x="1596.1" y="1323.6" width="12.6" height="12.6" fill="#7c7558"/>
<rect x="1598.1" y="1325.6" width="8.6" height="8.6" fill="#a59e78"/>
<path d="M1629.1 1311.6 H1650.7 L1658.2 1319.1 V1340.7 L1650.7 1348.2 H1629.1 L1621.6 1340.7 V1319.1 Z" fill="#484848"/>
<rect x="1633.6" y="1323.6" width="12.6" height="12.6" fill="#7c7558"/>
<rect x="1635.6" y="1325.6" width="8.6" height="8.6" fill="#a59e78"/>
<path d="M1666.0 1311.6 H1687.6 L1695.1 1319.1 V1340.7 L1687.6 1348.2 H1666.0 L1658.5 1340.7 V1319.1 Z" fill="#484848"/>
<rect x="1670.5" y="1323.6" width="12.6" height="12.6" fill="#7c7558"/>
<rect x="1672.5" y="1325.6" width="8.6" height="8.6" fill="#a59e78"/>
<rect x="1229.8" y="864.1" width="565.6" height="507.5" fill="none" stroke="#d8dce0" stroke-width="3"/>
<rect x="1229.8" y="864.1" width="565.6" height="507.5" fill="none" stroke="#2424b4" stroke-width="3" stroke-dasharray="12 12"/>
<path d="M1186.8 820.6 L1206.7 820.6 L1202.4 826.3 L1215.4 839.3 L1220.7 834.6 L1220.7 854.6 L1200.7 854.6 L1205.1 849.2 L1192.1 836.3 L1186.8 840.6 Z" fill="#000" stroke="#eeeeee" stroke-width="4" stroke-linejoin="miter"/>
<path d="M1186.8 820.6 L1206.7 820.6 L1202.4 826.3 L1215.4 839.3 L1220.7 834.6 L1220.7 854.6 L1200.7 854.6 L1205.1 849.2 L1192.1 836.3 L1186.8 840.6 Z" fill="#000"/>
<path d="M1836.0 820.6 L1816.1 820.6 L1820.4 826.3 L1807.4 839.3 L1802.1 834.6 L1802.1 854.6 L1822.1 854.6 L1817.7 849.2 L1830.7 836.3 L1836.0 840.6 Z" fill="#000" stroke="#eeeeee" stroke-width="4" stroke-linejoin="miter"/>
<path d="M1836.0 820.6 L1816.1 820.6 L1820.4 826.3 L1807.4 839.3 L1802.1 834.6 L1802.1 854.6 L1822.1 854.6 L1817.7 849.2 L1830.7 836.3 L1836.0 840.6 Z" fill="#000"/>
<path d="M1186.8 1413.0 L1206.7 1413.0 L1202.4 1407.3 L1215.4 1394.3 L1220.7 1399.0 L1220.7 1379.0 L1200.7 1379.0 L1205.1 1384.4 L1192.1 1397.3 L1186.8 1393.0 Z" fill="#000" stroke="#eeeeee" stroke-width="4" stroke-linejoin="miter"/>
<path d="M1186.8 1413.0 L1206.7 1413.0 L1202.4 1407.3 L1215.4 1394.3 L1220.7 1399.0 L1220.7 1379.0 L1200.7 1379.0 L1205.1 1384.4 L1192.1 1397.3 L1186.8 1393.0 Z" fill="#000"/>
<path d="M1802.0 1379.0 L1821.9 1379.0 L1817.6 1384.7 L1830.6 1397.7 L1835.9 1393.0 L1835.9 1413.0 L1815.9 1413.0 L1820.3 1407.6 L1807.3 1394.7 L1802.0 1399.0 Z" fill="#000" stroke="#eeeeee" stroke-width="4" stroke-linejoin="miter"/>
<path d="M1802.0 1379.0 L1821.9 1379.0 L1817.6 1384.7 L1830.6 1397.7 L1835.9 1393.0 L1835.9 1413.0 L1815.9 1413.0 L1820.3 1407.6 L1807.3 1394.7 L1802.0 1399.0 Z" fill="#000"/>
<path d="M1511.3 804.6 L1525.5 819.1 L1518.5 819.1 L1518.5 838.3 L1525.5 838.3 L1511.3 852.3 L1497.1 838.3 L1504.1 838.3 L1504.1 819.1 L1497.1 819.1 Z" fill="#000" stroke="#eeeeee" stroke-width="4" stroke-linejoin="miter"/>
<path d="M1511.3 804.6 L1525.5 819.1 L1518.5 819.1 L1518.5 838.3 L1525.5 838.3 L1511.3 852.3 L1497.1 838.3 L1504.1 838.3 L1504.1 819.1 L1497.1 819.1 Z" fill="#000"/>
<path d="M1511.3 1383.1 L1525.5 1397.6 L1518.5 1397.6 L1518.5 1416.8 L1525.5 1416.8 L1511.3 1430.8 L1497.1 1416.8 L1504.1 1416.8 L1504.1 1397.6 L1497.1 1397.6 Z" fill="#000" stroke="#eeeeee" stroke-width="4" stroke-linejoin="miter"/>
<path d="M1511.3 1383.1 L1525.5 1397.6 L1518.5 1397.6 L1518.5 1416.8 L1525.5 1416.8 L1511.3 1430.8 L1497.1 1416.8 L1504.1 1416.8 L1504.1 1397.6 L1497.1 1397.6 Z" fill="#000"/>
<path d="M1170.5 1117.9 L1185.0 1132.1 L1185.0 1125.1 L1204.2 1125.1 L1204.2 1132.1 L1218.2 1117.9 L1204.2 1103.7 L1204.2 1110.7 L1185.0 1110.7 L1185.0 1103.7 Z" fill="#000" stroke="#eeeeee" stroke-width="4" stroke-linejoin="miter"/>
<path d="M1170.5 1117.9 L1185.0 1132.1 L1185.0 1125.1 L1204.2 1125.1 L1204.2 1132.1 L1218.2 1117.9 L1204.2 1103.7 L1204.2 1110.7 L1185.0 1110.7 L1185.0 1103.7 Z" fill="#000"/>
<path d="M1806.7 1117.9 L1821.2 1132.1 L1821.2 1125.1 L1840.4 1125.1 L1840.4 1132.1 L1854.4 1117.9 L1840.4 1103.7 L1840.4 1110.7 L1821.2 1110.7 L1821.2 1103.7 Z" fill="#000" stroke="#eeeeee" stroke-width="4" stroke-linejoin="miter"/>
<path d="M1806.7 1117.9 L1821.2 1132.1 L1821.2 1125.1 L1840.4 1125.1 L1840.4 1132.1 L1854.4 1117.9 L1840.4 1103.7 L1840.4 1110.7 L1821.2 1110.7 L1821.2 1103.7 Z" fill="#000"/>
<text x="65.80" y="47.70" font-size="37.06" font-weight="400" font-style="normal" fill="#ffffff" textLength="1579.72" lengthAdjust="spacingAndGlyphs" >*svg.breadboard.ModuleL293D_42d90ef1f73875586e92241415996c10_2_breadboard.svg - Inkscape</text>
<text x="23.26" y="118.00" font-size="38.23" font-weight="400" font-style="normal" fill="#eeeeec" textLength="56.29" lengthAdjust="spacingAndGlyphs" >File</text>
<text x="124.86" y="118.00" font-size="38.23" font-weight="400" font-style="normal" fill="#eeeeec" textLength="60.19" lengthAdjust="spacingAndGlyphs" >Edit</text>
<text x="234.00" y="118.00" font-size="38.23" font-weight="400" font-style="normal" fill="#eeeeec" textLength="72.65" lengthAdjust="spacingAndGlyphs" >View</text>
<text x="355.29" y="118.00" font-size="38.23" font-weight="400" font-style="normal" fill="#eeeeec" textLength="86.47" lengthAdjust="spacingAndGlyphs" >Layer</text>
<text x="488.45" y="118.00" font-size="38.23" font-weight="400" font-style="normal" fill="#eeeeec" textLength="104.69" lengthAdjust="spacingAndGlyphs" >Object</text>
<text x="640.86" y="118.00" font-size="38.23" font-weight="400" font-style="normal" fill="#eeeeec" textLength="69.12" lengthAdjust="spacingAndGlyphs" >Path</text>
<text x="759.00" y="118.00" font-size="38.23" font-weight="400" font-style="normal" fill="#eeeeec" textLength="61.66" lengthAdjust="spacingAndGlyphs" >Text</text>
<text x="869.31" y="118.00" font-size="38.23" font-weight="400" font-style="normal" fill="#eeeeec" textLength="93.18" lengthAdjust="spacingAndGlyphs" >Filters</text>
<text x="1010.09" y="118.00" font-size="38.23" font-weight="400" font-style="normal" fill="#eeeeec" textLength="169.12" lengthAdjust="spacingAndGlyphs" >Extensions</text>
<text x="1227.25" y="118.00" font-size="38.23" font-weight="400" font-style="normal" fill="#eeeeec" textLength="74.64" lengthAdjust="spacingAndGlyphs" >Help</text>
<text x="1542.40" y="216.10" font-size="36.34" font-weight="400" font-style="normal" fill="#eeeeec" textLength="30.00" lengthAdjust="spacingAndGlyphs" >X:</text>
<text x="1599.10" y="216.10" font-size="36.34" font-weight="400" font-style="normal" fill="#eeeeec" textLength="81.99" lengthAdjust="spacingAndGlyphs" >0.000</text>
<text x="1898.90" y="216.10" font-size="36.34" font-weight="400" font-style="normal" fill="#eeeeec" textLength="31.63" lengthAdjust="spacingAndGlyphs" >Y:</text>
<text x="1957.10" y="216.10" font-size="36.34" font-weight="400" font-style="normal" fill="#eeeeec" textLength="81.99" lengthAdjust="spacingAndGlyphs" >0.000</text>
<text x="2257.60" y="216.10" font-size="36.34" font-weight="400" font-style="normal" fill="#eeeeec" textLength="41.75" lengthAdjust="spacingAndGlyphs" >W:</text>
<text x="2326.83" y="216.10" font-size="36.34" font-weight="400" font-style="normal" fill="#eeeeec" textLength="96.21" lengthAdjust="spacingAndGlyphs" >38.801</text>
<text x="2753.27" y="216.10" font-size="36.34" font-weight="400" font-style="normal" fill="#eeeeec" textLength="31.40" lengthAdjust="spacingAndGlyphs" >H:</text>
<text x="2812.71" y="216.10" font-size="36.34" font-weight="400" font-style="normal" fill="#eeeeec" textLength="99.37" lengthAdjust="spacingAndGlyphs" >34.870</text>
<text x="3148.04" y="216.70" font-size="37.79" font-weight="400" font-style="normal" fill="#eeeeec" textLength="61.68" lengthAdjust="spacingAndGlyphs" >mm</text>
<text x="2388.22" y="453.40" font-size="37.21" font-weight="400" font-style="normal" fill="#eeeeec" textLength="113.00" lengthAdjust="spacingAndGlyphs" >Display</text>
<text x="2568.99" y="453.40" font-size="37.21" font-weight="400" font-style="normal" fill="#eeeeec" textLength="107.55" lengthAdjust="spacingAndGlyphs" >Guides</text>
<text x="2745.89" y="453.40" font-size="37.21" font-weight="400" font-style="normal" fill="#eeeeec" textLength="80.44" lengthAdjust="spacingAndGlyphs" >Grids</text>
<text x="2901.84" y="453.40" font-size="37.21" font-weight="400" font-style="normal" fill="#eeeeec" textLength="85.53" lengthAdjust="spacingAndGlyphs" >Color</text>
<text x="3055.63" y="453.40" font-size="37.21" font-weight="400" font-style="normal" fill="#eeeeec" textLength="140.30" lengthAdjust="spacingAndGlyphs" >Scripting</text>
<text x="3260.09" y="453.40" font-size="37.21" font-weight="400" font-style="normal" fill="#eeeeec" textLength="150.30" lengthAdjust="spacingAndGlyphs" >Metadata</text>
<text x="3476.20" y="453.40" font-size="37.21" font-weight="400" font-style="normal" fill="#eeeeec" textLength="119.84" lengthAdjust="spacingAndGlyphs" >License</text>
<text x="2370.98" y="543.60" font-size="40.70" font-weight="700" font-style="normal" fill="#eeeeec" textLength="201.52" lengthAdjust="spacingAndGlyphs" >Front page</text>
<text x="3039.69" y="544.00" font-size="40.70" font-weight="700" font-style="normal" fill="#eeeeec" textLength="138.26" lengthAdjust="spacingAndGlyphs" >Display</text>
<text x="2370.22" y="631.10" font-size="37.79" font-weight="400" font-style="normal" fill="#eeeeec" textLength="120.70" lengthAdjust="spacingAndGlyphs" >Format:</text>
<text x="2526.86" y="631.10" font-size="37.79" font-weight="400" font-style="normal" fill="#eeeeec" textLength="121.85" lengthAdjust="spacingAndGlyphs" >Custom</text>
<text x="2832.92" y="631.10" font-size="37.79" font-weight="400" font-style="normal" fill="#eeeeec" textLength="29.07" lengthAdjust="spacingAndGlyphs" >in</text>
<text x="2373.00" y="744.70" font-size="37.79" font-weight="400" font-style="normal" fill="#eeeeec" textLength="103.72" lengthAdjust="spacingAndGlyphs" >Width:</text>
<text x="2519.10" y="744.70" font-size="37.79" font-weight="400" font-style="normal" fill="#eeeeec" textLength="80.46" lengthAdjust="spacingAndGlyphs" >1.528</text>
<text x="2370.08" y="859.00" font-size="37.79" font-weight="400" font-style="normal" fill="#eeeeec" textLength="116.34" lengthAdjust="spacingAndGlyphs" >Height:</text>
<text x="2519.13" y="859.00" font-size="37.79" font-weight="400" font-style="normal" fill="#eeeeec" textLength="79.12" lengthAdjust="spacingAndGlyphs" >1.373</text>
<text x="2372.04" y="961.10" font-size="37.79" font-weight="400" font-style="normal" fill="#eeeeec" textLength="187.56" lengthAdjust="spacingAndGlyphs" >Orientation:</text>
<text x="2370.22" y="1062.90" font-size="37.79" font-weight="400" font-style="normal" fill="#eeeeec" textLength="279.79" lengthAdjust="spacingAndGlyphs" >Resize to content:</text>
<text x="2372.16" y="1194.50" font-size="37.79" font-weight="400" font-style="normal" fill="#eeeeec" textLength="88.45" lengthAdjust="spacingAndGlyphs" >Scale:</text>
<text x="2517.94" y="1194.50" font-size="37.79" font-weight="400" font-style="normal" fill="#eeeeec" textLength="135.63" lengthAdjust="spacingAndGlyphs" >0.001000</text>
<text x="2496.22" y="1297.00" font-size="34.88" font-weight="400" font-style="normal" fill="#eeeeec" textLength="201.92" lengthAdjust="spacingAndGlyphs" >in  per user unit</text>
<text x="2419.60" y="1386.50" font-size="37.79" font-weight="400" font-style="normal" fill="#eeeeec" textLength="132.10" lengthAdjust="spacingAndGlyphs" >Viewbox</text>
<text x="3038.67" y="631.10" font-size="37.79" font-weight="400" font-style="normal" fill="#eeeeec" textLength="211.88" lengthAdjust="spacingAndGlyphs" >Display units:</text>
<text x="3387.52" y="631.10" font-size="37.79" font-weight="400" font-style="normal" fill="#eeeeec" textLength="37.48" lengthAdjust="spacingAndGlyphs" >px</text>
<text x="3078.10" y="1235.70" font-size="37.79" font-weight="400" font-style="normal" fill="#eeeeec" textLength="76.58" lengthAdjust="spacingAndGlyphs" >Page</text>
<text x="3230.86" y="1235.70" font-size="37.79" font-weight="400" font-style="normal" fill="#eeeeec" textLength="107.29" lengthAdjust="spacingAndGlyphs" >Border</text>
<text x="3414.39" y="1235.70" font-size="37.79" font-weight="400" font-style="normal" fill="#eeeeec" textLength="74.92" lengthAdjust="spacingAndGlyphs" >Desk</text>
<text x="3111.68" y="1323.30" font-size="37.79" font-weight="400" font-style="normal" fill="#eeeeec" textLength="219.18" lengthAdjust="spacingAndGlyphs" >Checkerboard</text>
<text x="3109.73" y="1386.80" font-size="37.79" font-weight="400" font-style="normal" fill="#eeeeec" textLength="108.42" lengthAdjust="spacingAndGlyphs" >Border</text>
<text x="3149.20" y="1449.80" font-size="37.79" font-weight="400" font-style="normal" fill="#eeeeec" textLength="223.96" lengthAdjust="spacingAndGlyphs" >Always on top</text>
<text x="3148.68" y="1513.00" font-size="37.79" font-weight="400" font-style="normal" fill="#eeeeec" textLength="215.76" lengthAdjust="spacingAndGlyphs" >Show shadow</text>
<text x="3112.37" y="1575.90" font-size="37.79" font-weight="400" font-style="normal" fill="#eeeeec" textLength="332.45" lengthAdjust="spacingAndGlyphs" >Show big page labels</text>
<text x="3040.16" y="1656.60" font-size="40.70" font-weight="700" font-style="normal" fill="#eeeeec" textLength="129.19" lengthAdjust="spacingAndGlyphs" >Render</text>
<text x="3111.45" y="1712.50" font-size="37.79" font-weight="400" font-style="normal" fill="#eeeeec" textLength="246.91" lengthAdjust="spacingAndGlyphs" >Use antialiasing</text>
<text x="3112.36" y="1775.70" font-size="37.79" font-weight="400" font-style="normal" fill="#eeeeec" textLength="189.49" lengthAdjust="spacingAndGlyphs" >Clip to page</text>
<text x="53.07" y="1953.30" font-size="37.79" font-weight="400" font-style="normal" fill="#eeeeec" textLength="55.49" lengthAdjust="spacingAndGlyphs" >Fill:</text>
<text x="195.02" y="1953.30" font-size="37.79" font-weight="700" font-style="normal" fill="#eeeeec" textLength="93.51" lengthAdjust="spacingAndGlyphs" >Unset</text>
<text x="1.00" y="2003.60" font-size="37.79" font-weight="400" font-style="normal" fill="#eeeeec" textLength="107.44" lengthAdjust="spacingAndGlyphs" >Stroke:</text>
<text x="195.02" y="2003.60" font-size="37.79" font-weight="700" font-style="normal" fill="#eeeeec" textLength="93.51" lengthAdjust="spacingAndGlyphs" >Unset</text>
<text x="345.04" y="2003.60" font-size="37.79" font-weight="400" font-style="normal" fill="#eeeeec" textLength="99.33" lengthAdjust="spacingAndGlyphs" >0.0960</text>
<text x="468.01" y="1975.70" font-size="37.79" font-weight="400" font-style="normal" fill="#eeeeec" textLength="35.51" lengthAdjust="spacingAndGlyphs" >O:</text>
<text x="544.32" y="1975.70" font-size="37.79" font-weight="400" font-style="normal" fill="#eeeeec" textLength="52.82" lengthAdjust="spacingAndGlyphs" >100</text>
<text x="812.70" y="1975.70" font-size="37.79" font-weight="400" font-style="italic" fill="#eeeeec" textLength="77.45" lengthAdjust="spacingAndGlyphs" >[root]</text>
<text x="3007.20" y="1953.00" font-size="37.79" font-weight="400" font-style="normal" fill="#eeeeec" textLength="29.46" lengthAdjust="spacingAndGlyphs" >X:</text>
<text x="3075.95" y="1953.00" font-size="37.79" font-weight="400" font-style="normal" fill="#eeeeec" textLength="98.72" lengthAdjust="spacingAndGlyphs" >271.62</text>
<text x="3007.20" y="2003.40" font-size="37.79" font-weight="400" font-style="normal" fill="#eeeeec" textLength="29.60" lengthAdjust="spacingAndGlyphs" >Y:</text>
<text x="3079.11" y="2003.40" font-size="37.79" font-weight="400" font-style="normal" fill="#eeeeec" textLength="95.60" lengthAdjust="spacingAndGlyphs" >-71.19</text>
<text x="3209.87" y="1977.00" font-size="37.79" font-weight="400" font-style="normal" fill="#eeeeec" textLength="31.14" lengthAdjust="spacingAndGlyphs" >Z:</text>
<text x="3284.02" y="1977.00" font-size="37.79" font-weight="400" font-style="normal" fill="#eeeeec" textLength="80.97" lengthAdjust="spacingAndGlyphs" >129%</text>
<text x="3516.15" y="1977.00" font-size="37.79" font-weight="400" font-style="normal" fill="#eeeeec" textLength="30.89" lengthAdjust="spacingAndGlyphs" >R:</text>
<text x="3606.62" y="1977.00" font-size="37.79" font-weight="400" font-style="normal" fill="#eeeeec" textLength="78.04" lengthAdjust="spacingAndGlyphs" >0.00°</text>
<text x="267.07" y="310.30" font-size="30.52" font-weight="400" font-style="normal" fill="#eeeeec" textLength="56.63" lengthAdjust="spacingAndGlyphs" >-250</text>
<text x="460.98" y="310.30" font-size="30.52" font-weight="400" font-style="normal" fill="#eeeeec" textLength="56.42" lengthAdjust="spacingAndGlyphs" >-200</text>
<text x="655.19" y="310.30" font-size="30.52" font-weight="400" font-style="normal" fill="#eeeeec" textLength="55.80" lengthAdjust="spacingAndGlyphs" >-150</text>
<text x="849.07" y="310.30" font-size="30.52" font-weight="400" font-style="normal" fill="#eeeeec" textLength="57.04" lengthAdjust="spacingAndGlyphs" >-100</text>
<text x="1042.66" y="310.30" font-size="30.52" font-weight="400" font-style="normal" fill="#eeeeec" textLength="41.35" lengthAdjust="spacingAndGlyphs" >-50</text>
<text x="1236.55" y="310.30" font-size="30.52" font-weight="400" font-style="normal" fill="#eeeeec" textLength="16.18" lengthAdjust="spacingAndGlyphs" >0</text>
<text x="1430.50" y="310.30" font-size="30.52" font-weight="400" font-style="normal" fill="#eeeeec" textLength="30.47" lengthAdjust="spacingAndGlyphs" >50</text>
<text x="1625.59" y="310.30" font-size="30.52" font-weight="400" font-style="normal" fill="#eeeeec" textLength="45.98" lengthAdjust="spacingAndGlyphs" >100</text>
<text x="1819.59" y="310.30" font-size="30.52" font-weight="400" font-style="normal" fill="#eeeeec" textLength="43.43" lengthAdjust="spacingAndGlyphs" >150</text>
<text x="2012.18" y="310.30" font-size="30.52" font-weight="400" font-style="normal" fill="#eeeeec" textLength="46.60" lengthAdjust="spacingAndGlyphs" >200</text>
<text x="2206.11" y="310.30" font-size="30.52" font-weight="400" font-style="normal" fill="#eeeeec" textLength="45.46" lengthAdjust="spacingAndGlyphs" >250</text>
<text x="-0.93" y="0.00" font-size="30.52" font-weight="400" font-style="normal" fill="#eeeeec" textLength="57.04" lengthAdjust="spacingAndGlyphs" transform="translate(129.3 535.5) rotate(-90)">-100</text>
<text x="-0.94" y="0.00" font-size="30.52" font-weight="400" font-style="normal" fill="#eeeeec" textLength="41.35" lengthAdjust="spacingAndGlyphs" transform="translate(129.3 713.7) rotate(-90)">-50</text>
<text x="-0.95" y="0.00" font-size="30.52" font-weight="400" font-style="normal" fill="#eeeeec" textLength="16.18" lengthAdjust="spacingAndGlyphs" transform="translate(129.3 882.4) rotate(-90)">0</text>
<text x="-0.90" y="0.00" font-size="30.52" font-weight="400" font-style="normal" fill="#eeeeec" textLength="30.47" lengthAdjust="spacingAndGlyphs" transform="translate(129.3 1090.7) rotate(-90)">50</text>
<text x="-1.81" y="0.00" font-size="30.52" font-weight="400" font-style="normal" fill="#eeeeec" textLength="45.98" lengthAdjust="spacingAndGlyphs" transform="translate(129.3 1299.2) rotate(-90)">100</text>
<text x="-1.71" y="0.00" font-size="30.52" font-weight="400" font-style="normal" fill="#eeeeec" textLength="43.43" lengthAdjust="spacingAndGlyphs" transform="translate(129.3 1490.7) rotate(-90)">150</text>
<text x="-0.92" y="0.00" font-size="30.52" font-weight="400" font-style="normal" fill="#eeeeec" textLength="46.60" lengthAdjust="spacingAndGlyphs" transform="translate(129.3 1688.5) rotate(-90)">200</text>
<text x="1163.05" y="1977.60" font-size="37.79" font-weight="700" fill="#eeeeec" textLength="107.94" lengthAdjust="spacingAndGlyphs" xml:space="preserve">Group</text>
<text x="1270.98" y="1977.60" font-size="37.79" font-weight="400" fill="#eeeeec" textLength="50.01" lengthAdjust="spacingAndGlyphs" xml:space="preserve"> of </text>
<text x="1320.99" y="1977.60" font-size="37.79" font-weight="700" fill="#eeeeec" textLength="40.03" lengthAdjust="spacingAndGlyphs" xml:space="preserve">41</text>
<text x="1361.02" y="1977.60" font-size="37.79" font-weight="400" fill="#eeeeec" textLength="1100.16" lengthAdjust="spacingAndGlyphs" xml:space="preserve"> objects in root. Click selection again to toggle scale/rotation handles.</text>
<path d="M2455.5 129.8 C2448.4 128.7 2428.9 125.1 2412.9 123.2 C2396.9 121.3 2377.4 118.8 2359.7 118.7 C2341.9 118.6 2321.9 120.3 2306.4 122.4 C2290.9 124.5 2278.2 127.1 2266.5 131.2 C2254.8 135.3 2241.4 139.8 2235.9 147.1 C2230.4 154.4 2232.2 162.4 2233.3 175.1 C2234.4 187.8 2237.5 207.5 2242.6 223.0 C2247.7 238.5 2254.6 253.1 2263.9 268.2 C2273.2 283.3 2284.3 299.6 2298.5 313.4 C2312.7 327.1 2334.4 341.6 2349.0 350.7 C2363.6 359.8 2374.3 364.0 2386.3 368.0 C2398.3 372.0 2410.3 375.3 2420.9 374.6 C2431.5 373.9 2441.2 370.6 2450.1 364.0 C2459.0 357.4 2467.0 347.1 2474.1 334.7 C2481.2 322.3 2486.9 305.9 2492.7 289.5 C2498.5 273.1 2505.6 253.2 2508.7 236.3 C2511.8 219.5 2513.1 203.5 2511.3 188.4 C2509.5 173.3 2504.7 157.8 2498.0 145.8 C2491.3 133.8 2481.2 124.5 2471.4 116.5 C2461.7 108.5 2449.2 103.2 2439.5 97.9 C2429.8 92.6 2420.2 87.5 2412.9 84.6 C2405.6 81.7 2398.5 81.3 2395.6 80.6" fill="none" stroke="#26e400" stroke-width="35" stroke-linecap="round" stroke-linejoin="round"/>
<path d="M2742.3 124.4 C2742.2 128.8 2742.2 140.7 2741.8 151.0 C2741.4 161.3 2740.9 174.7 2739.7 186.5 C2738.5 198.3 2737.1 210.7 2734.4 221.9 C2731.7 233.1 2728.1 244.4 2723.7 253.9 C2719.3 263.4 2714.0 272.5 2707.8 278.7 C2701.6 284.9 2694.8 288.4 2686.5 291.1 C2678.2 293.8 2667.0 295.9 2658.1 294.7 C2649.2 293.5 2640.1 289.9 2633.2 284.0 C2626.2 278.1 2619.1 268.1 2616.4 259.2 C2613.8 250.3 2614.5 241.7 2617.3 230.8 C2620.1 219.9 2627.0 204.5 2633.2 193.6 C2639.4 182.7 2646.8 172.9 2654.5 165.2 C2662.2 157.5 2671.1 151.4 2679.4 147.4 C2687.7 143.4 2695.3 142.4 2704.2 141.2 C2713.1 140.0 2727.9 140.5 2732.6 140.3" fill="none" stroke="#26e400" stroke-width="35" stroke-linecap="round" stroke-linejoin="round"/>
<circle cx="2356.4" cy="837.2" r="17.7" fill="#26e400"/><circle cx="2436.8" cy="842.3" r="17.7" fill="#26e400"/>
<path d="M2281.9 889.9 C2285.4 892.2 2295.7 898.5 2303.2 904.0 C2310.7 909.5 2318.0 918.1 2326.9 923.0 C2335.8 927.9 2346.6 932.0 2356.4 933.6 C2366.2 935.2 2375.2 934.2 2386.0 932.4 C2396.8 930.6 2410.6 927.3 2421.4 923.0 C2432.2 918.7 2441.3 911.9 2451.0 906.4 C2460.7 900.9 2474.7 892.6 2479.4 889.9" fill="none" stroke="#26e400" stroke-width="35" stroke-linecap="round" stroke-linejoin="round"/>
<path d="M2746.1 1132.4 C2749.1 1134.5 2758.2 1142.0 2764.2 1145.0 C2770.2 1148.0 2775.7 1151.1 2782.3 1150.5 C2788.9 1149.9 2795.6 1148.4 2804.0 1141.4 C2812.4 1134.5 2822.7 1123.3 2833.0 1108.8 C2843.3 1094.3 2855.3 1073.2 2865.6 1054.5 C2875.9 1035.8 2885.5 1015.9 2894.6 996.6 C2903.7 977.3 2912.7 956.7 2919.9 938.6 C2927.1 920.5 2933.8 900.6 2938.0 887.9 C2942.2 875.2 2944.0 866.8 2945.2 862.6" fill="none" stroke="#26e400" stroke-width="35" stroke-linecap="round" stroke-linejoin="round"/>
<path d="M2655.5 1148.7 C2648.9 1146.3 2632.0 1138.1 2615.7 1134.2 C2599.4 1130.3 2574.7 1125.1 2557.8 1125.1 C2540.9 1125.1 2526.4 1129.1 2514.3 1134.2 C2502.2 1139.3 2490.4 1147.2 2485.3 1155.9 C2480.2 1164.7 2478.7 1176.4 2483.5 1186.7 C2488.3 1197.0 2500.1 1205.7 2514.3 1217.5 C2528.5 1229.3 2551.7 1245.8 2568.6 1257.3 C2585.5 1268.8 2602.4 1279.0 2615.7 1286.3 C2629.0 1293.5 2639.2 1301.4 2648.3 1300.8 C2657.4 1300.2 2662.2 1293.0 2670.0 1282.7 C2677.8 1272.4 2689.7 1254.3 2695.4 1239.2 C2701.1 1224.1 2704.4 1207.2 2704.4 1192.1 C2704.4 1177.0 2701.7 1161.4 2695.4 1148.7 C2689.1 1136.0 2678.5 1124.5 2666.4 1116.1 C2654.3 1107.6 2630.2 1101.0 2623.0 1098.0" fill="none" stroke="#26e400" stroke-width="35" stroke-linecap="round" stroke-linejoin="round"/>
<path d="M2625 1100 Q2650 1110 2668 1125 L2655 1150 Q2630 1135 2612 1128 Z" fill="#26e400"/></svg></body></html>
